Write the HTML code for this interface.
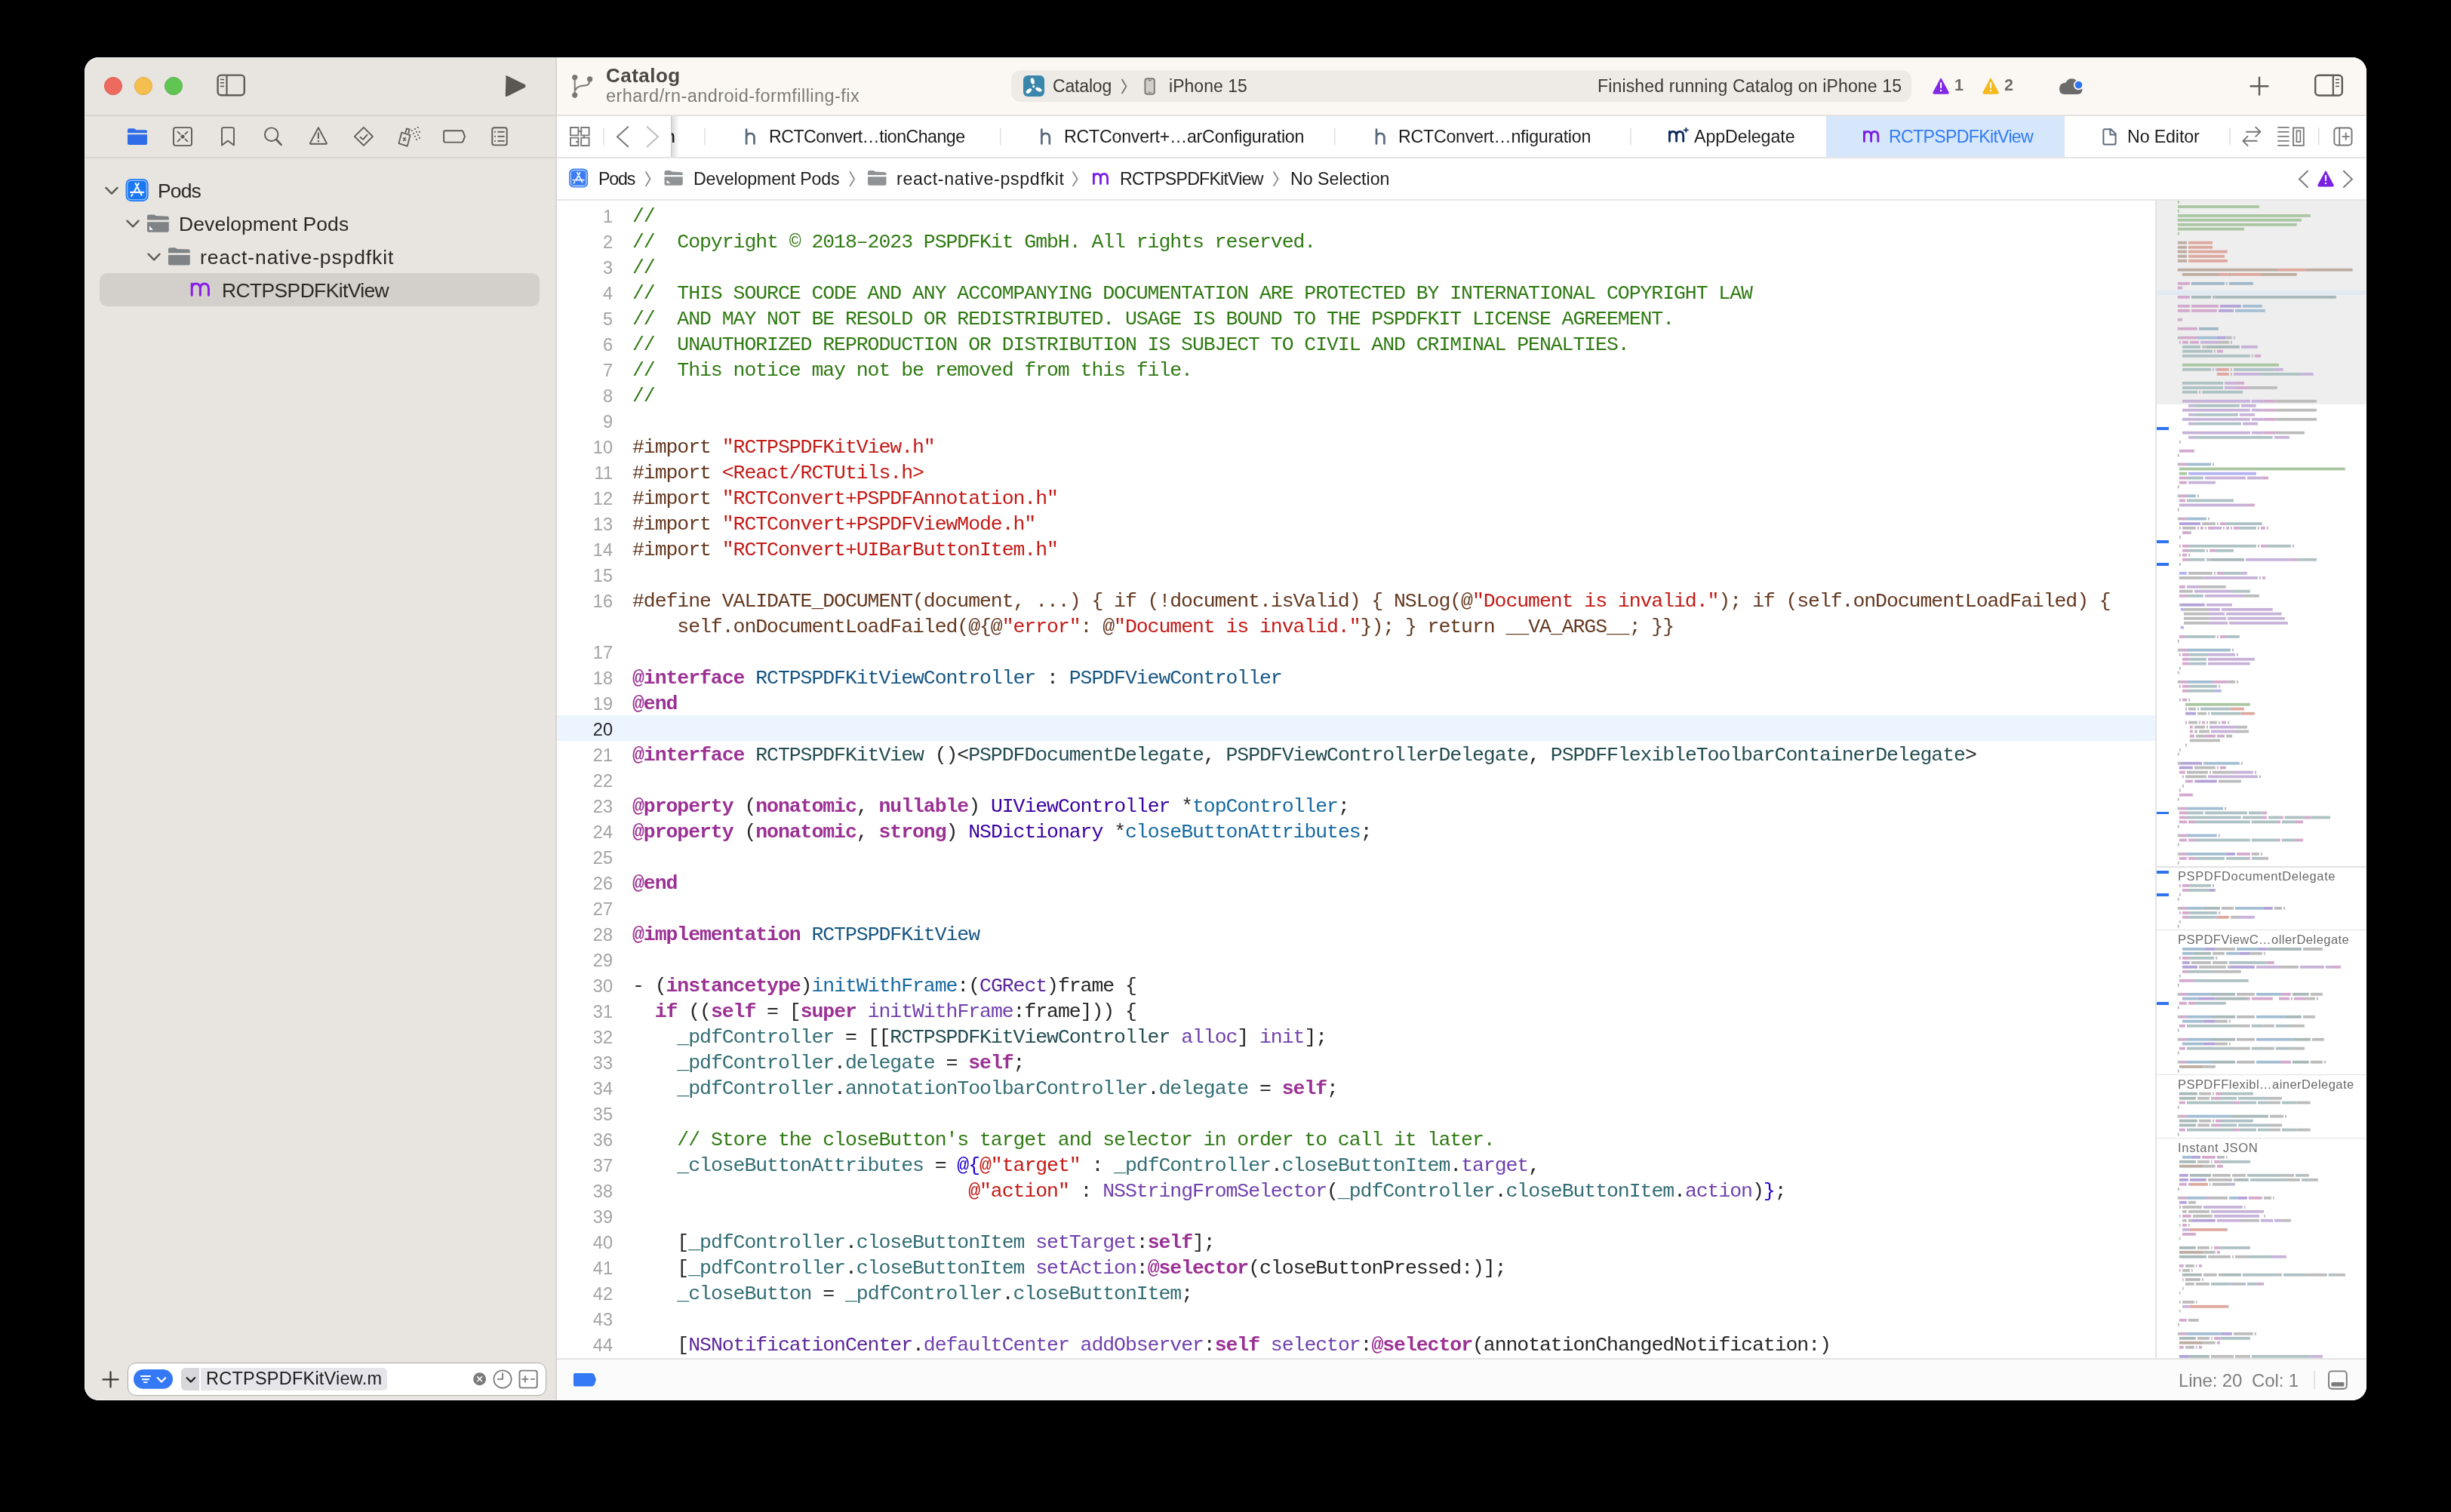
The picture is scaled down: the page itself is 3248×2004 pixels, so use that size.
<!DOCTYPE html>
<html><head><meta charset="utf-8"><style>
*{margin:0;padding:0;box-sizing:border-box}
html,body{width:3248px;height:2004px;background:#000;overflow:hidden;font-family:"Liberation Sans",sans-serif}
.a{position:absolute}
#win{position:absolute;left:112px;top:76px;width:3024px;height:1780px;border-radius:19px;overflow:hidden;background:#fff}
#hl{position:absolute;left:112px;top:76px;width:3024px;height:1780px;border-radius:19px;border:1px solid rgba(255,255,255,0.55)}
#side{position:absolute;left:0;top:0;width:626px;height:1780px;background:#e8e5e1}
#tb{position:absolute;left:626px;top:0;width:2398px;height:76px;background:#fbf8f3}
.txt{position:absolute;white-space:pre;line-height:1;will-change:transform}
.code{position:absolute;white-space:pre;will-change:transform;font-family:"Liberation Mono",monospace;font-size:26.5px;letter-spacing:-1.064px;color:#262626;line-height:34px;height:34px}
.ln{position:absolute;will-change:transform;width:60px;text-align:right;font-size:23.5px;color:#a3a3a3;line-height:34px;height:34px}
.k{color:#9b3194;font-weight:bold}
.s{color:#c41a16}
.c{color:#2f7a12}
.p{color:#643820}
.td{color:#175683}
.od{color:#1769a0}
.pc{color:#244d52}
.pf{color:#326d74}
.oc{color:#3900a0}
.of{color:#7040ae}
.ot{color:#5c2699}
.n{color:#1c00cf}
</style></head>
<body><div id="win">
<div id="side"></div><div class="a" style="left:0.0px;top:76.0px;width:626.0px;height:2.0px;background:#d8d5d1;"></div><div class="a" style="left:0.0px;top:132.0px;width:626.0px;height:2.0px;background:#d8d5d1;"></div><div class="a" style="left:20.0px;top:286.0px;width:583.0px;height:44.0px;background:#d3d0cb;border-radius:10px"></div><div class="txt" style="left:97.4px;top:164.1px;font-size:26.5px;color:#2b2825;font-weight:400;letter-spacing:-0.869px;">Pods</div><div class="txt" style="left:125.3px;top:208.3px;font-size:26.5px;color:#2b2825;font-weight:400;letter-spacing:0.086px;">Development Pods</div><div class="txt" style="left:153.4px;top:252.4px;font-size:26.5px;color:#2b2825;font-weight:400;letter-spacing:0.890px;">react-native-pspdfkit</div><div class="txt" style="left:181.5px;top:296.4px;font-size:26.5px;color:#2b2825;font-weight:400;letter-spacing:-0.643px;">RCTPSPDFKitView</div><div class="a" style="left:624.0px;top:0.0px;width:2.0px;height:1780.0px;background:#d9d6d2;"></div><div id="tb"></div><div class="a" style="left:626.0px;top:76.0px;width:2398.0px;height:2.0px;background:#e4e2df;"></div><div class="txt" style="left:691.0px;top:10.8px;font-size:26px;color:#4a4744;font-weight:700;letter-spacing:0.476px;">Catalog</div><div class="txt" style="left:691.0px;top:40.4px;font-size:23.5px;color:#7f7a75;font-weight:400;letter-spacing:0.451px;">erhard/rn-android-formfilling-fix</div><div class="a" style="left:1228.0px;top:16.6px;width:1193.0px;height:42.9px;background:#eeebe7;border-radius:12px"></div><div class="txt" style="left:1283.0px;top:27.1px;font-size:23px;color:#3b3835;font-weight:400;letter-spacing:-0.164px;">Catalog</div><div class="txt" style="left:1436.7px;top:27.1px;font-size:23px;color:#3b3835;font-weight:400;letter-spacing:0.026px;">iPhone 15</div><div class="txt" style="left:2478.4px;top:27.0px;font-size:21.5px;color:#6e6a66;font-weight:700;">1</div><div class="txt" style="left:2543.6px;top:27.0px;font-size:21.5px;color:#6e6a66;font-weight:700;">2</div><div class="txt" style="left:2005.0px;top:27.1px;font-size:23px;color:#3b3835;font-weight:400;letter-spacing:0.148px;">Finished running Catalog on iPhone 15</div><div class="a" style="left:626.0px;top:78.0px;width:2398.0px;height:54.0px;background:#ffffff;"></div><div class="a" style="left:626.0px;top:132.0px;width:2398.0px;height:2.0px;background:#e4e4e4;"></div><div class="a" style="left:2308.0px;top:78.0px;width:316.0px;height:54.0px;background:#d6e6fb;"></div><div class="txt" style="left:906.9px;top:94.0px;font-size:23.2px;color:#1d1d1d;font-weight:400;letter-spacing:-0.528px;">RCTConvert…tionChange</div><div class="txt" style="left:1298.0px;top:94.0px;font-size:23.2px;color:#1d1d1d;font-weight:400;letter-spacing:-0.220px;">RCTConvert+…arConfiguration</div><div class="txt" style="left:1740.7px;top:94.0px;font-size:23.2px;color:#1d1d1d;font-weight:400;letter-spacing:-0.239px;">RCTConvert…nfiguration</div><div class="txt" style="left:2133.0px;top:94.0px;font-size:23.2px;color:#1d1d1d;font-weight:400;letter-spacing:-0.048px;">AppDelegate</div><div class="txt" style="left:2390.8px;top:94.0px;font-size:23.2px;color:#2f7cf6;font-weight:400;letter-spacing:-0.720px;">RCTPSPDFKitView</div><div class="txt" style="left:2707.3px;top:94.0px;font-size:23.2px;color:#1d1d1d;font-weight:400;letter-spacing:-0.120px;">No Editor</div><div class="a" style="left:626.0px;top:134.0px;width:2398.0px;height:54.0px;background:#ffffff;"></div><div class="a" style="left:626.0px;top:188.0px;width:2398.0px;height:2.0px;background:#e6e6e6;"></div><div class="txt" style="left:680.7px;top:150.0px;font-size:23.2px;color:#1d1d1d;font-weight:400;letter-spacing:-1.153px;">Pods</div><div class="txt" style="left:806.8px;top:150.0px;font-size:23.2px;color:#1d1d1d;font-weight:400;letter-spacing:-0.148px;">Development Pods</div><div class="txt" style="left:1076.1px;top:150.0px;font-size:23.2px;color:#1d1d1d;font-weight:400;letter-spacing:0.661px;">react-native-pspdfkit</div><div class="txt" style="left:1372.0px;top:150.0px;font-size:23.2px;color:#1d1d1d;font-weight:400;letter-spacing:-0.812px;">RCTPSPDFKitView</div><div class="txt" style="left:1598.0px;top:150.0px;font-size:23.2px;color:#1d1d1d;font-weight:400;letter-spacing:0.001px;">No Selection</div><div class="a" style="left:626.0px;top:190.0px;width:2398.0px;height:1534.0px;background:#ffffff;"></div><div class="a" style="left:626.0px;top:872.0px;width:2118.0px;height:34.0px;background:#ecf5ff;"></div><div class="a" style="left:2744.0px;top:190.0px;width:2.0px;height:1534.0px;background:#e3e3e3;"></div><div class="a" style="left:2746.0px;top:190.0px;width:278.0px;height:270.3px;background:#eeeeee;"></div><div class="a" style="left:2746.0px;top:309.0px;width:278.0px;height:6.0px;background:#e1e9f2;"></div><div class="a" style="left:2746.0px;top:1072.3px;width:278.0px;height:1.6px;background:#e2e2e2;"></div><div class="a" style="left:2746.0px;top:1155.8px;width:278.0px;height:1.6px;background:#e2e2e2;"></div><div class="a" style="left:2746.0px;top:1347.7px;width:278.0px;height:1.6px;background:#e2e2e2;"></div><div class="a" style="left:2746.0px;top:1431.7px;width:278.0px;height:1.6px;background:#e2e2e2;"></div><div class="txt" style="left:2773.8px;top:1076.8px;font-size:16.5px;color:#6a6a6a;font-weight:400;letter-spacing:0.612px;">PSPDFDocumentDelegate</div><div class="txt" style="left:2773.8px;top:1160.8px;font-size:16.5px;color:#6a6a6a;font-weight:400;letter-spacing:0.464px;">PSPDFViewC…ollerDelegate</div><div class="txt" style="left:2773.8px;top:1352.8px;font-size:16.5px;color:#6a6a6a;font-weight:400;letter-spacing:0.450px;">PSPDFFlexibl…ainerDelegate</div><div class="txt" style="left:2773.8px;top:1436.8px;font-size:16.5px;color:#6a6a6a;font-weight:400;letter-spacing:0.689px;">Instant JSON</div><div class="a" style="left:2746.0px;top:489.8px;width:16.0px;height:3.8px;background:#2f74ee;"></div><div class="a" style="left:2746.0px;top:640.0px;width:16.0px;height:3.8px;background:#2f74ee;"></div><div class="a" style="left:2746.0px;top:670.0px;width:16.0px;height:3.8px;background:#2f74ee;"></div><div class="a" style="left:2746.0px;top:999.5px;width:16.0px;height:3.8px;background:#2f74ee;"></div><div class="a" style="left:2746.0px;top:1077.9px;width:16.0px;height:3.8px;background:#2f74ee;"></div><div class="a" style="left:2746.0px;top:1107.8px;width:16.0px;height:3.8px;background:#2f74ee;"></div><div class="a" style="left:2746.0px;top:1251.8px;width:16.0px;height:3.8px;background:#2f74ee;"></div><div class="a" style="left:626.0px;top:1724.0px;width:2398.0px;height:2.0px;background:#e3e3e3;"></div><div class="a" style="left:626.0px;top:1726.0px;width:2398.0px;height:54.0px;background:#fbfbfb;"></div><div class="txt" style="left:2774.7px;top:1741.8px;font-size:24px;color:#7f7f7f;font-weight:400;letter-spacing:-0.163px;">Line: 20  Col: 1</div><div class="a" style="left:56.7px;top:1730.0px;width:555.6px;height:43.6px;background:#ffffff;border:1.5px solid #aeaba7;border-radius:11px"></div><div class="a" style="left:128.3px;top:1737.0px;width:23.5px;height:29.8px;background:#d8d8dc;border-radius:6px 0 0 6px"></div><div class="a" style="left:154.1px;top:1737.2px;width:246.6px;height:29.4px;background:#e6e6ea;border-radius:0 5px 5px 0"></div><div class="txt" style="left:160.6px;top:1739.7px;font-size:23.5px;color:#1d1d1d;font-weight:400;letter-spacing:0.232px;">RCTPSPDFKitView.m</div>
<div class="ln" style="left:640px;top:194px">1</div><div class="code" style="left:726.2px;top:194px"><span class="c">//</span></div>
<div class="ln" style="left:640px;top:228px">2</div><div class="code" style="left:726.2px;top:228px"><span class="c">//  Copyright © 2018–2023 PSPDFKit GmbH. All rights reserved.</span></div>
<div class="ln" style="left:640px;top:262px">3</div><div class="code" style="left:726.2px;top:262px"><span class="c">//</span></div>
<div class="ln" style="left:640px;top:296px">4</div><div class="code" style="left:726.2px;top:296px"><span class="c">//  THIS SOURCE CODE AND ANY ACCOMPANYING DOCUMENTATION ARE PROTECTED BY INTERNATIONAL COPYRIGHT LAW</span></div>
<div class="ln" style="left:640px;top:330px">5</div><div class="code" style="left:726.2px;top:330px"><span class="c">//  AND MAY NOT BE RESOLD OR REDISTRIBUTED. USAGE IS BOUND TO THE PSPDFKIT LICENSE AGREEMENT.</span></div>
<div class="ln" style="left:640px;top:364px">6</div><div class="code" style="left:726.2px;top:364px"><span class="c">//  UNAUTHORIZED REPRODUCTION OR DISTRIBUTION IS SUBJECT TO CIVIL AND CRIMINAL PENALTIES.</span></div>
<div class="ln" style="left:640px;top:398px">7</div><div class="code" style="left:726.2px;top:398px"><span class="c">//  This notice may not be removed from this file.</span></div>
<div class="ln" style="left:640px;top:432px">8</div><div class="code" style="left:726.2px;top:432px"><span class="c">//</span></div>
<div class="ln" style="left:640px;top:466px">9</div><div class="ln" style="left:640px;top:500px">10</div><div class="code" style="left:726.2px;top:500px"><span class="p">#import </span><span class="s">&quot;RCTPSPDFKitView.h&quot;</span></div>
<div class="ln" style="left:640px;top:534px">11</div><div class="code" style="left:726.2px;top:534px"><span class="p">#import </span><span class="s">&lt;React/RCTUtils.h&gt;</span></div>
<div class="ln" style="left:640px;top:568px">12</div><div class="code" style="left:726.2px;top:568px"><span class="p">#import </span><span class="s">&quot;RCTConvert+PSPDFAnnotation.h&quot;</span></div>
<div class="ln" style="left:640px;top:602px">13</div><div class="code" style="left:726.2px;top:602px"><span class="p">#import </span><span class="s">&quot;RCTConvert+PSPDFViewMode.h&quot;</span></div>
<div class="ln" style="left:640px;top:636px">14</div><div class="code" style="left:726.2px;top:636px"><span class="p">#import </span><span class="s">&quot;RCTConvert+UIBarButtonItem.h&quot;</span></div>
<div class="ln" style="left:640px;top:670px">15</div><div class="ln" style="left:640px;top:704px">16</div><div class="code" style="left:726.2px;top:704px"><span class="p">#define VALIDATE_DOCUMENT(document, ...) { if (!document.isValid) { NSLog(@</span><span class="s">&quot;Document is invalid.&quot;</span><span class="p">); if (self.onDocumentLoadFailed) {</span></div>
<div class="code" style="left:726.2px;top:738px"><span class="p">    self.onDocumentLoadFailed(@{@</span><span class="s">&quot;error&quot;</span><span class="p">: @</span><span class="s">&quot;Document is invalid.&quot;</span><span class="p">}); } return __VA_ARGS__; }}</span></div>
<div class="ln" style="left:640px;top:772px">17</div><div class="ln" style="left:640px;top:806px">18</div><div class="code" style="left:726.2px;top:806px"><span class="k">@interface</span> <span class="td">RCTPSPDFKitViewController</span> : <span class="td">PSPDFViewController</span></div>
<div class="ln" style="left:640px;top:840px">19</div><div class="code" style="left:726.2px;top:840px"><span class="k">@end</span></div>
<div class="ln" style="left:640px;top:874px;color:#262626">20</div><div class="ln" style="left:640px;top:908px">21</div><div class="code" style="left:726.2px;top:908px"><span class="k">@interface</span> <span class="pc">RCTPSPDFKitView</span> ()&lt;<span class="pc">PSPDFDocumentDelegate</span>, <span class="pc">PSPDFViewControllerDelegate</span>, <span class="pc">PSPDFFlexibleToolbarContainerDelegate</span>&gt;</div>
<div class="ln" style="left:640px;top:942px">22</div><div class="ln" style="left:640px;top:976px">23</div><div class="code" style="left:726.2px;top:976px"><span class="k">@property</span> (<span class="k">nonatomic</span>, <span class="k">nullable</span>) <span class="oc">UIViewController</span> *<span class="od">topController</span>;</div>
<div class="ln" style="left:640px;top:1010px">24</div><div class="code" style="left:726.2px;top:1010px"><span class="k">@property</span> (<span class="k">nonatomic</span>, <span class="k">strong</span>) <span class="oc">NSDictionary</span> *<span class="od">closeButtonAttributes</span>;</div>
<div class="ln" style="left:640px;top:1044px">25</div><div class="ln" style="left:640px;top:1078px">26</div><div class="code" style="left:726.2px;top:1078px"><span class="k">@end</span></div>
<div class="ln" style="left:640px;top:1112px">27</div><div class="ln" style="left:640px;top:1146px">28</div><div class="code" style="left:726.2px;top:1146px"><span class="k">@implementation</span> <span class="td">RCTPSPDFKitView</span></div>
<div class="ln" style="left:640px;top:1180px">29</div><div class="ln" style="left:640px;top:1214px">30</div><div class="code" style="left:726.2px;top:1214px">- (<span class="k">instancetype</span>)<span class="od">initWithFrame</span>:(<span class="ot">CGRect</span>)frame {</div>
<div class="ln" style="left:640px;top:1248px">31</div><div class="code" style="left:726.2px;top:1248px">  <span class="k">if</span> ((<span class="k">self</span> = [<span class="k">super</span> <span class="of">initWithFrame</span>:frame])) {</div>
<div class="ln" style="left:640px;top:1282px">32</div><div class="code" style="left:726.2px;top:1282px">    <span class="pf">_pdfController</span> = [[<span class="pc">RCTPSPDFKitViewController</span> <span class="of">alloc</span>] <span class="of">init</span>];</div>
<div class="ln" style="left:640px;top:1316px">33</div><div class="code" style="left:726.2px;top:1316px">    <span class="pf">_pdfController</span>.<span class="pf">delegate</span> = <span class="k">self</span>;</div>
<div class="ln" style="left:640px;top:1350px">34</div><div class="code" style="left:726.2px;top:1350px">    <span class="pf">_pdfController</span>.<span class="pf">annotationToolbarController</span>.<span class="pf">delegate</span> = <span class="k">self</span>;</div>
<div class="ln" style="left:640px;top:1384px">35</div><div class="ln" style="left:640px;top:1418px">36</div><div class="code" style="left:726.2px;top:1418px">    <span class="c">// Store the closeButton&#x27;s target and selector in order to call it later.</span></div>
<div class="ln" style="left:640px;top:1452px">37</div><div class="code" style="left:726.2px;top:1452px">    <span class="pf">_closeButtonAttributes</span> = <span class="n">@{</span><span class="s">@&quot;target&quot;</span> : <span class="pf">_pdfController</span>.<span class="pf">closeButtonItem</span>.<span class="of">target</span>,</div>
<div class="ln" style="left:640px;top:1486px">38</div><div class="code" style="left:726.2px;top:1486px">                              <span class="s">@&quot;action&quot;</span> : <span class="of">NSStringFromSelector</span>(<span class="pf">_pdfController</span>.<span class="pf">closeButtonItem</span>.<span class="of">action</span>)<span class="n">}</span>;</div>
<div class="ln" style="left:640px;top:1520px">39</div><div class="ln" style="left:640px;top:1554px">40</div><div class="code" style="left:726.2px;top:1554px">    [<span class="pf">_pdfController</span>.<span class="pf">closeButtonItem</span> <span class="of">setTarget</span>:<span class="k">self</span>];</div>
<div class="ln" style="left:640px;top:1588px">41</div><div class="code" style="left:726.2px;top:1588px">    [<span class="pf">_pdfController</span>.<span class="pf">closeButtonItem</span> <span class="of">setAction</span>:<span class="k">@selector</span>(closeButtonPressed:)];</div>
<div class="ln" style="left:640px;top:1622px">42</div><div class="code" style="left:726.2px;top:1622px">    <span class="pf">_closeButton</span> = <span class="pf">_pdfController</span>.<span class="pf">closeButtonItem</span>;</div>
<div class="ln" style="left:640px;top:1656px">43</div><div class="ln" style="left:640px;top:1690px">44</div><div class="code" style="left:726.2px;top:1690px">    [<span class="ot">NSNotificationCenter</span>.<span class="of">defaultCenter</span> <span class="of">addObserver</span>:<span class="k">self</span> <span class="of">selector</span>:<span class="k">@selector</span>(annotationChangedNotification:)</div>

</div><svg class="a" style="left:0;top:0" width="3248" height="2004" viewBox="0 0 3248 2004"><circle cx="150" cy="114" r="11.6" fill="#ed6a5e" stroke="#d5554a" stroke-width="0.8"/>
<circle cx="190" cy="114" r="11.6" fill="#f5bf4f" stroke="#d9a03c" stroke-width="0.8"/>
<circle cx="230" cy="114" r="11.6" fill="#61c554" stroke="#4ea840" stroke-width="0.8"/>
<rect x="288.6" y="99.6" width="35.2" height="26.6" rx="4.5" fill="none" stroke="#5f5b57" stroke-width="2.4"/>
<line x1="300.5" y1="100" x2="300.5" y2="126" stroke="#5f5b57" stroke-width="2.2"/>
<line x1="291.8" y1="105.4" x2="297" y2="105.4" stroke="#5f5b57" stroke-width="1.6"/>
<line x1="291.8" y1="109.8" x2="297" y2="109.8" stroke="#5f5b57" stroke-width="1.6"/>
<line x1="291.8" y1="114.4" x2="297" y2="114.4" stroke="#5f5b57" stroke-width="1.6"/>
<path d="M671.5,102.5 Q670,100.8 672.2,101.6 L694.6,112.6 Q696.6,114 694.6,115.4 L672.2,126.6 Q670,127.6 670.8,125.6 Z" fill="#5b5752" stroke="#5b5752" stroke-width="2" stroke-linejoin="round"/>
<path d="M169,172.5 Q169,170.2 171.3,170.2 L177,170.2 Q178.5,170.2 179.5,171.6 L180.2,172.3 L193,172.3 Q195,172.3 195,174.5 L195,176.2 L169,176.2 Z" fill="#2f6de8"/>
<path d="M169,178.3 L195,178.3 L195,189.8 Q195,192 192.8,192 L171.2,192 Q169,192 169,189.8 Z" fill="#2f6de8"/>
<rect x="230" y="169.1" width="24" height="23.8" rx="2.6" fill="none" stroke="#5f5b57" stroke-width="1.9"/>
<circle cx="242" cy="181" r="2.6" fill="#5f5b57"/>
<path d="M235.5,174.6 L238.6,177.7 M248.5,174.6 L245.4,177.7 M235.5,187.4 L238.6,184.3 M248.5,187.4 L245.4,184.3" stroke="#5f5b57" stroke-width="1.7" stroke-linecap="round"/>
<path d="M294,192.6 L294,171.3 Q294,169.1 296.2,169.1 L307.8,169.1 Q310,169.1 310,171.3 L310,192.6 L302,186.6 Z" fill="none" stroke="#5f5b57" stroke-width="1.9" stroke-linejoin="round"/>
<circle cx="359.7" cy="178.2" r="8.8" fill="none" stroke="#5f5b57" stroke-width="1.9"/>
<line x1="366.2" y1="185" x2="372.6" y2="191.8" stroke="#5f5b57" stroke-width="2.6" stroke-linecap="round"/>
<path d="M421.9,169.2 L432.8,189.6 Q433.4,190.8 432,190.8 L411.8,190.8 Q410.4,190.8 411,189.6 Z" fill="none" stroke="#5f5b57" stroke-width="1.9" stroke-linejoin="round"/>
<path d="M421.9,176.6 L421.9,183.2" stroke="#5f5b57" stroke-width="2" stroke-linecap="round"/><circle cx="421.9" cy="187" r="1.2" fill="#5f5b57"/>
<path d="M481.9,168.8 L493.9,180.8 L481.9,192.8 L469.9,180.8 Z" fill="none" stroke="#5f5b57" stroke-width="1.9" stroke-linejoin="round"/>
<path d="M477.4,181.8 L481.1,184.9 L486.6,178.6" fill="none" stroke="#5f5b57" stroke-width="1.8" stroke-linecap="round" stroke-linejoin="round"/>
<path d="M532.3,175.5 L543.5,179.2 L539.8,193.6 L528.5,190.1 Z" fill="none" stroke="#5f5b57" stroke-width="1.8" stroke-linejoin="round"/>
<path d="M537.3,175.9 L538.8,170.5 L542.6,171.5 L541.2,177" fill="none" stroke="#5f5b57" stroke-width="1.8"/>
<path d="M534,182.5 L538,186.5 M537.5,182 L534.5,187" stroke="#5f5b57" stroke-width="1.5"/>
<rect x="552.9" y="168.0" width="1.8" height="1.8" fill="#5f5b57"/>
<rect x="549.0" y="170.1" width="1.8" height="1.8" fill="#5f5b57"/>
<rect x="545.0" y="172.0" width="1.8" height="1.8" fill="#5f5b57"/>
<rect x="551.1" y="173.9" width="1.8" height="1.8" fill="#5f5b57"/>
<rect x="555.0" y="173.9" width="1.8" height="1.8" fill="#5f5b57"/>
<rect x="547.0" y="176.0" width="1.8" height="1.8" fill="#5f5b57"/>
<rect x="553.1" y="178.1" width="1.8" height="1.8" fill="#5f5b57"/>
<rect x="549.0" y="179.9" width="1.8" height="1.8" fill="#5f5b57"/>
<rect x="555.0" y="181.9" width="1.8" height="1.8" fill="#5f5b57"/>
<rect x="551.1" y="184.0" width="1.8" height="1.8" fill="#5f5b57"/>
<path d="M590,173.2 L611.6,173.2 Q612.8,173.2 613.5,174.2 L616,180.8 L613.5,187.5 Q612.8,188.6 611.6,188.6 L590,188.6 Q588.1,188.6 588.1,186.6 L588.1,175.2 Q588.1,173.2 590,173.2 Z" fill="none" stroke="#5f5b57" stroke-width="1.9" stroke-linejoin="round"/>
<rect x="652.3" y="169.2" width="19.4" height="23.2" rx="2.6" fill="none" stroke="#5f5b57" stroke-width="1.9"/>
<rect x="655.1" y="173.9" width="1.8" height="1.8" fill="#5f5b57"/><line x1="659.4" y1="174.8" x2="668.6" y2="174.8" stroke="#5f5b57" stroke-width="1.8"/>
<rect x="655.1" y="179.9" width="1.8" height="1.8" fill="#5f5b57"/><line x1="659.4" y1="180.8" x2="668.6" y2="180.8" stroke="#5f5b57" stroke-width="1.8"/>
<rect x="655.1" y="186.0" width="1.8" height="1.8" fill="#5f5b57"/><line x1="659.4" y1="186.9" x2="668.6" y2="186.9" stroke="#5f5b57" stroke-width="1.8"/>
<path d="M140.4,248.9 L148.0,256.6 L155.5,248.9" fill="none" stroke="#5f5b57" stroke-width="2.4" stroke-linecap="round" stroke-linejoin="round"/>
<path d="M168.5,292.7 L176.1,300.4 L183.6,292.7" fill="none" stroke="#5f5b57" stroke-width="2.4" stroke-linecap="round" stroke-linejoin="round"/>
<path d="M196.5,336.7 L204.1,344.4 L211.6,336.7" fill="none" stroke="#5f5b57" stroke-width="2.4" stroke-linecap="round" stroke-linejoin="round"/>
<rect x="166.6" y="236.9" width="30" height="30" rx="7.2" fill="#1a78f6"/><rect x="168.79999999999998" y="239.1" width="25.6" height="25.6" rx="5.0" fill="none" stroke="#a9c9f2" stroke-width="1.1"/><path d="M179.5,243.1 L187.6,258.5 M183.7,243.1 L177.5,254.9 M173.0,254.9 L190.2,254.9 M175.5,257.7 L174.3,259.7" stroke="rgba(255,255,255,0.93)" stroke-width="2.2" stroke-linecap="round"/>
<rect x="754.1" y="223.6" width="25" height="25" rx="6.0" fill="#3a7cf1"/><rect x="756.3000000000001" y="225.79999999999998" width="20.6" height="20.6" rx="4.2" fill="none" stroke="#d0e0fb" stroke-width="1.1"/><path d="M764.9,228.8 L771.6,241.6 M768.4,228.8 L763.2,238.6 M759.4,238.6 L773.8,238.6 M761.5,240.9 L760.5,242.6" stroke="rgba(255,255,255,0.93)" stroke-width="1.8" stroke-linecap="round"/>
<path d="M195,286.7 Q195,284.5 197.2,284.5 L203.64,284.5 Q205.368,284.5 206.52,286.1 L221.8,286.8 Q223.8,286.8 223.8,288.8 L223.8,291.46 L195,291.46 Z" fill="#7f8386"/><path d="M195,294.244 L223.8,294.244 L223.8,305.5 Q223.8,307.7 221.60000000000002,307.7 L197.2,307.7 Q195,307.7 195,305.5 Z" fill="#7f8386"/><path d="M198,299.58 L198,304.7 L203,304.7 Z" fill="#fff"/>
<path d="M223,330.5 Q223,328.3 225.2,328.3 L231.64,328.3 Q233.368,328.3 234.52,329.90000000000003 L249.8,330.6 Q251.8,330.6 251.8,332.6 L251.8,335.26 L223,335.26 Z" fill="#7f8386"/><path d="M223,338.044 L251.8,338.044 L251.8,349.3 Q251.8,351.5 249.60000000000002,351.5 L225.2,351.5 Q223,351.5 223,349.3 Z" fill="#7f8386"/>
<path d="M880.5,228.2 Q880.5,226 882.7,226 L887.79,226 Q889.248,226 890.22,227.6 L902.8,228.3 Q904.8,228.3 904.8,230.3 L904.8,231.94 L880.5,231.94 Z" fill="#8f9396"/><path d="M880.5,234.316 L904.8,234.316 L904.8,243.60000000000002 Q904.8,245.8 902.5999999999999,245.8 L882.7,245.8 Q880.5,245.8 880.5,243.60000000000002 Z" fill="#8f9396"/><path d="M883.5,238.87 L883.5,242.8 L888.5,242.8 Z" fill="#fff"/>
<path d="M1150,228.2 Q1150,226 1152.2,226 L1157.35,226 Q1158.82,226 1159.8,227.6 L1172.5,228.3 Q1174.5,228.3 1174.5,230.3 L1174.5,231.94 L1150,231.94 Z" fill="#8f9396"/><path d="M1150,234.316 L1174.5,234.316 L1174.5,243.60000000000002 Q1174.5,245.8 1172.3,245.8 L1152.2,245.8 Q1150,245.8 1150,243.60000000000002 Z" fill="#8f9396"/>
<path d="M254.2,391.2 L254.2,375.9 M254.2,382.9 Q254.2,375.9 259.8,375.9 Q265.4,375.9 265.4,382.9 L265.4,391.2 M265.4,382.9 Q265.4,375.9 270.9,375.9 Q276.5,375.9 276.5,382.9 L276.5,391.2" fill="none" stroke="#8a1ee8" stroke-width="3.0" stroke-linecap="round"/>
<path d="M2470.4,187.4 L2470.4,174.4 M2470.4,180.4 Q2470.4,174.4 2475.0,174.4 Q2479.6,174.4 2479.6,180.4 L2479.6,187.4 M2479.6,180.4 Q2479.6,174.4 2484.2,174.4 Q2488.8,174.4 2488.8,180.4 L2488.8,187.4" fill="none" stroke="#7a1ee3" stroke-width="2.8" stroke-linecap="round"/>
<path d="M1449.4,243.6 L1449.4,230.4 M1449.4,236.5 Q1449.4,230.4 1454.0,230.4 Q1458.5,230.4 1458.5,236.5 L1458.5,243.6 M1458.5,236.5 Q1458.5,230.4 1463.0,230.4 Q1467.6,230.4 1467.6,236.5 L1467.6,243.6" fill="none" stroke="#7a1ee3" stroke-width="2.8" stroke-linecap="round"/>
<path d="M2212.4,187.3 L2212.4,174.4 M2212.4,180.4 Q2212.4,174.4 2217.0,174.4 Q2221.6,174.4 2221.6,180.4 L2221.6,187.3 M2221.6,180.4 Q2221.6,174.4 2226.1,174.4 Q2230.7,174.4 2230.7,180.4 L2230.7,187.3" fill="none" stroke="#0b2a5c" stroke-width="2.8" stroke-linecap="round"/>
<path d="M2234.3,169.2 L2234.3,175.6 M2231,172.4 L2237.6,172.4" stroke="#0b2a5c" stroke-width="1.8"/>
<path d="M989.1,171.6 L989.1,190.4 M989.1,183 Q989.1,176.8 994.3000000000001,176.8 Q999.5,176.8 999.5,182.6 L999.5,190.4" fill="none" stroke="#5b6b7d" stroke-width="2.7" stroke-linecap="round"/>
<path d="M1380.4,171.6 L1380.4,190.4 M1380.4,183 Q1380.4,176.8 1385.6,176.8 Q1390.8,176.8 1390.8,182.6 L1390.8,190.4" fill="none" stroke="#5b6b7d" stroke-width="2.7" stroke-linecap="round"/>
<path d="M1824.0,171.6 L1824.0,190.4 M1824.0,183 Q1824.0,176.8 1829.1999999999998,176.8 Q1834.3999999999999,176.8 1834.3999999999999,182.6 L1834.3999999999999,190.4" fill="none" stroke="#5b6b7d" stroke-width="2.7" stroke-linecap="round"/>
<rect x="738" y="154" width="151" height="54" fill="#fff"/>
<path d="M889.6,177.2 Q892.2,177.4 892.2,181 L892.2,189" fill="none" stroke="#1d1d1d" stroke-width="2.4"/>
<defs><linearGradient id="sh" x1="0" x2="1"><stop offset="0" stop-color="#000" stop-opacity="0.16"/><stop offset="1" stop-color="#000" stop-opacity="0"/></linearGradient></defs>
<rect x="889" y="154" width="11" height="54" fill="url(#sh)"/>
<line x1="889.5" y1="154" x2="889.5" y2="208" stroke="#c8c8c8" stroke-width="1"/>
<path d="M756,169 h10.4 v10.4 h-10.4 Z M770.2,169 h10.4 v10.4 h-10.4 Z M756,182.6 h10.4 v10.4 h-10.4 Z M770.2,182.6 h10.4 v10.4 h-10.4 Z" fill="none" stroke="#7a7a7a" stroke-width="1.9"/>
<path d="M766.4,174 L771.6,174 M774,179.4 L774,183 M766.4,188 L763,188" stroke="#7a7a7a" stroke-width="1.9"/>
<line x1="800" y1="169.4" x2="800" y2="192.4" stroke="#e2e2e2" stroke-width="1.6"/>
<path d="M832.2,168.2 L818,181.2 L832.2,194.2" fill="none" stroke="#7c7c7c" stroke-width="2.1" stroke-linecap="round"/>
<path d="M857.8,168.2 L872,181.2 L857.8,194.2" fill="none" stroke="#c0c0c0" stroke-width="2.1" stroke-linecap="round"/>
<line x1="934" y1="169.4" x2="934" y2="192.6" stroke="#e2e2e2" stroke-width="1.6"/>
<line x1="1325.7" y1="169.4" x2="1325.7" y2="192.6" stroke="#e2e2e2" stroke-width="1.6"/>
<line x1="1768.8" y1="169.4" x2="1768.8" y2="192.6" stroke="#e2e2e2" stroke-width="1.6"/>
<line x1="2161" y1="169.4" x2="2161" y2="192.6" stroke="#e2e2e2" stroke-width="1.6"/>
<path d="M2787.4,173.3 Q2787.4,171.3 2789.4,171.3 L2797.4,171.3 L2803.6,177.5 L2803.6,189.6 Q2803.6,191.6 2801.6,191.6 L2789.4,191.6 Q2787.4,191.6 2787.4,189.6 Z M2796.4,171.6 L2796.4,178.4 L2803.4,178.4" fill="none" stroke="#5b6b7d" stroke-width="2" stroke-linejoin="round"/>
<line x1="2955" y1="169.3" x2="2955" y2="192.6" stroke="#e0e0e0" stroke-width="1.6"/>
<line x1="3072.7" y1="169.3" x2="3072.7" y2="192.6" stroke="#e0e0e0" stroke-width="1.6"/>
<path d="M2977,174.7 L2995,174.7 M2989.2,168.6 L2995.4,174.7 L2989.2,180.9 M2990.6,186.8 L2972.6,186.8 M2978.5,180.7 L2972.4,186.8 L2978.5,193" fill="none" stroke="#767676" stroke-width="1.9" stroke-linecap="round" stroke-linejoin="round"/>
<line x1="3018.2" y1="168.9" x2="3033.5" y2="168.9" stroke="#767676" stroke-width="1.7"/>
<line x1="3018.2" y1="174.8" x2="3033.5" y2="174.8" stroke="#767676" stroke-width="1.7"/>
<line x1="3018.2" y1="180.8" x2="3033.5" y2="180.8" stroke="#767676" stroke-width="1.7"/>
<line x1="3018.2" y1="186.8" x2="3033.5" y2="186.8" stroke="#767676" stroke-width="1.7"/>
<line x1="3018.2" y1="192.8" x2="3033.5" y2="192.8" stroke="#767676" stroke-width="1.7"/>
<rect x="3039" y="169.4" width="13.8" height="23.4" fill="none" stroke="#767676" stroke-width="1.8"/><rect x="3043.4" y="173.4" width="5" height="14.6" fill="none" stroke="#767676" stroke-width="1.7"/>
<rect x="3093.3" y="169.5" width="23.2" height="23" rx="4" fill="none" stroke="#767676" stroke-width="1.9"/><line x1="3100.2" y1="169.5" x2="3100.2" y2="192.5" stroke="#767676" stroke-width="1.8"/><path d="M3108.7,175.8 L3108.7,185.8 M3103.7,180.8 L3113.7,180.8" stroke="#767676" stroke-width="1.8"/>
<path d="M761.7,103 L761.7,126 M781.6,105 Q781.6,113 776,113.2 Q764,113.6 762.6,119.5" fill="none" stroke="#7a7672" stroke-width="1.9"/>
<circle cx="761.7" cy="102.6" r="3.6" fill="#7a7672"/>
<circle cx="781.6" cy="104.9" r="3.6" fill="#7a7672"/>
<circle cx="761.7" cy="126.1" r="3.6" fill="#7a7672"/>
<rect x="1356" y="99.9" width="28" height="28" rx="6" fill="#3a87ab"/>
<g fill="#fff"><ellipse cx="1368.3" cy="107.5" rx="2.4" ry="4.2" transform="rotate(-15 1368.3 107.5)"/><ellipse cx="1376.4" cy="118.7" rx="4.5" ry="2.3" transform="rotate(25 1376.4 118.7)"/><ellipse cx="1363.4" cy="120.6" rx="4.3" ry="2.4" transform="rotate(-40 1363.4 120.6)"/><circle cx="1369.6" cy="114.6" r="1.6"/></g>
<path d="M1487,105.5 L1492.4,114.5 L1487,123.5" fill="none" stroke="#7a7672" stroke-width="1.9" stroke-linecap="round"/>
<rect x="1517.4" y="104.3" width="12.4" height="20.4" rx="2.6" fill="#d2cfcb" stroke="#7a7672" stroke-width="1.9"/><path d="M1521.6,106.6 h4 M1521.6,122.3 h4" stroke="#7a7672" stroke-width="1.1"/>
<path d="M2572.05,104.3 L2581.7999999999997,122.30000000000001 Q2582.6,123.9 2580.6,123.9 L2563.5,123.9 Q2561.5,123.9 2562.3,122.30000000000001 Z" fill="#8228e6" stroke="#8228e6" stroke-width="1.5" stroke-linejoin="round"/><path d="M2572.05,109.892 L2572.05,116.072" stroke="#fff" stroke-width="2.1" stroke-linecap="round"/><circle cx="2572.05" cy="120.0" r="1.2" fill="#fff"/>
<path d="M2638.0,104.3 L2647.7,122.30000000000001 Q2648.5,123.9 2646.5,123.9 L2629.5,123.9 Q2627.5,123.9 2628.3,122.30000000000001 Z" fill="#f6b91c" stroke="#f6b91c" stroke-width="1.5" stroke-linejoin="round"/><path d="M2638.0,109.892 L2638.0,116.072" stroke="#fff" stroke-width="2.1" stroke-linecap="round"/><circle cx="2638.0" cy="120.0" r="1.2" fill="#fff"/>
<path d="M3082.0,227.2 L3091.7999999999997,245.2 Q3092.6,246.79999999999998 3090.6,246.79999999999998 L3073.4,246.79999999999998 Q3071.4,246.79999999999998 3072.2000000000003,245.2 Z" fill="#7a22e4" stroke="#7a22e4" stroke-width="1.5" stroke-linejoin="round"/><path d="M3082.0,232.792 L3082.0,238.97199999999998" stroke="#fff" stroke-width="2.1" stroke-linecap="round"/><circle cx="3082.0" cy="242.9" r="1.2" fill="#fff"/>
<path d="M3057.9,226.8 L3046.9,237.4 L3057.9,248 M3105.9,226.8 L3116.9,237.4 L3105.9,248" fill="none" stroke="#7c7c7c" stroke-width="2" stroke-linecap="round"/>
<path d="M2735,124.9 L2753,124.9 Q2759.4,124.9 2759.4,118.6 Q2759.4,113 2754.3,112.4 Q2752.5,104.3 2745.5,104.3 Q2739.8,104.3 2737.7,109.6 Q2729,110.2 2729,117.6 Q2729,124.9 2735,124.9 Z" fill="#6b6b6b"/>
<circle cx="2754.5" cy="112.6" r="6.6" fill="#faf8f4"/><circle cx="2754.5" cy="112.6" r="4.8" fill="#2f74ee"/>
<path d="M2994,102.8 L2994,125.6 M2982.6,114.2 L3005.4,114.2" stroke="#5f5b57" stroke-width="2.4" stroke-linecap="round"/>
<rect x="3068.2" y="99.7" width="35.6" height="26.8" rx="4.5" fill="none" stroke="#5f5b57" stroke-width="2.4"/><line x1="3091.8" y1="100" x2="3091.8" y2="126" stroke="#5f5b57" stroke-width="2.2"/>
<line x1="3095" y1="105.4" x2="3100" y2="105.4" stroke="#5f5b57" stroke-width="1.6"/>
<line x1="3095" y1="109.8" x2="3100" y2="109.8" stroke="#5f5b57" stroke-width="1.6"/>
<line x1="3095" y1="114.4" x2="3100" y2="114.4" stroke="#5f5b57" stroke-width="1.6"/>
<path d="M856,228 L861.6,237.2 L856,246.4" fill="none" stroke="#8a8a8a" stroke-width="1.8" stroke-linecap="round"/>
<path d="M1126.5,228 L1132.1,237.2 L1126.5,246.4" fill="none" stroke="#8a8a8a" stroke-width="1.8" stroke-linecap="round"/>
<path d="M1422,228 L1427.6,237.2 L1422,246.4" fill="none" stroke="#8a8a8a" stroke-width="1.8" stroke-linecap="round"/>
<path d="M1688,228 L1693.6,237.2 L1688,246.4" fill="none" stroke="#8a8a8a" stroke-width="1.8" stroke-linecap="round"/>
<path d="M146.5,1818.4 L146.5,1838.4 M136.5,1828.4 L156.5,1828.4" stroke="#3a3632" stroke-width="2.3" stroke-linecap="round"/>
<rect x="177" y="1815" width="52" height="25.8" rx="12.9" fill="#3478f6"/>
<path d="M186.2,1824 L199.8,1824 M188.2,1828.2 L197.8,1828.2 M190.1,1832.1 L195.5,1832.1" stroke="#fff" stroke-width="1.9"/>
<path d="M208.9,1826.2 L214,1831.5 L219.2,1826.2" fill="none" stroke="#fff" stroke-width="2.3" stroke-linecap="round" stroke-linejoin="round"/>
<path d="M247.7,1826.2 L252.9,1831.5 L258.1,1826.2" fill="none" stroke="#1e1e1e" stroke-width="2.3" stroke-linecap="round" stroke-linejoin="round"/>
<circle cx="635.6" cy="1827.7" r="8.5" fill="#7b7b7b"/><path d="M632.3,1824.4 L638.9,1831 M638.9,1824.4 L632.3,1831" stroke="#fff" stroke-width="1.5"/>
<circle cx="666" cy="1827.9" r="11.6" fill="none" stroke="#7a7a7a" stroke-width="1.8"/><path d="M666,1819.6 L666,1827.9 L659,1827.9" fill="none" stroke="#7a7a7a" stroke-width="1.8"/>
<rect x="688.5" y="1816.6" width="23.2" height="22.8" rx="2.6" fill="none" stroke="#7a7a7a" stroke-width="1.9"/><path d="M695.9,1823.4 L695.9,1832.4 M691.4,1827.9 L700.4,1827.9 M703.2,1827.9 L708.6,1827.9" stroke="#7a7a7a" stroke-width="1.8"/>
<path d="M762,1820 L784,1820 Q786.3,1820 787.6,1822 L790,1828.8 L787.6,1835.6 Q786.3,1837.6 784,1837.6 L762,1837.6 Q760,1837.6 760,1835.6 L760,1822 Q760,1820 762,1820 Z" fill="#3478f6"/>
<line x1="3067" y1="1817" x2="3067" y2="1841" stroke="#dcdcdc" stroke-width="1.6"/>
<rect x="3086" y="1817.4" width="23.8" height="23.4" rx="4" fill="none" stroke="#7a7a7a" stroke-width="1.9"/><rect x="3089.4" y="1832" width="17" height="5.6" rx="1.6" fill="#7a7a7a"/><rect x="2885.8" y="266.0" width="2.0" height="3.8" fill="#aac6a2"/>
<rect x="2885.8" y="272.1" width="108.2" height="3.8" fill="#aac6a2"/>
<rect x="2885.8" y="277.9" width="2.0" height="3.8" fill="#aac6a2"/>
<rect x="2885.8" y="284.0" width="176.0" height="3.8" fill="#aac6a2"/>
<rect x="2885.8" y="289.8" width="164.0" height="3.8" fill="#aac6a2"/>
<rect x="2885.8" y="295.9" width="157.9" height="3.8" fill="#aac6a2"/>
<rect x="2885.8" y="301.7" width="88.1" height="3.8" fill="#aac6a2"/>
<rect x="2885.8" y="307.8" width="2.0" height="3.8" fill="#aac6a2"/>
<rect x="2885.8" y="319.8" width="12.2" height="3.8" fill="#bdaca2"/>
<rect x="2900.0" y="319.8" width="32.0" height="3.8" fill="#dea89f"/>
<rect x="2885.8" y="325.9" width="12.2" height="3.8" fill="#bdaca2"/>
<rect x="2900.0" y="325.9" width="32.0" height="3.8" fill="#dea89f"/>
<rect x="2885.8" y="331.7" width="12.2" height="3.8" fill="#bdaca2"/>
<rect x="2900.0" y="331.7" width="51.8" height="3.8" fill="#dea89f"/>
<rect x="2885.8" y="337.8" width="12.2" height="3.8" fill="#bdaca2"/>
<rect x="2900.0" y="337.8" width="48.0" height="3.8" fill="#dea89f"/>
<rect x="2885.8" y="343.9" width="12.2" height="3.8" fill="#bdaca2"/>
<rect x="2900.0" y="343.9" width="51.8" height="3.8" fill="#dea89f"/>
<rect x="2885.8" y="355.8" width="132.3" height="3.8" fill="#bdaca2"/>
<rect x="3018.1" y="355.8" width="37.8" height="3.8" fill="#dea89f"/>
<rect x="3055.9" y="355.8" width="61.7" height="3.8" fill="#bdaca2"/>
<rect x="2891.9" y="361.9" width="50.0" height="3.8" fill="#bdaca2"/>
<rect x="2941.9" y="361.9" width="11.9" height="3.8" fill="#dea89f"/>
<rect x="2953.8" y="361.9" width="3.8" height="3.8" fill="#bdaca2"/>
<rect x="2957.6" y="361.9" width="38.4" height="3.8" fill="#dea89f"/>
<rect x="2996.0" y="361.9" width="47.7" height="3.8" fill="#bdaca2"/>
<rect x="2885.8" y="373.9" width="16.0" height="3.8" fill="#d3aacd"/>
<rect x="2903.8" y="373.9" width="44.2" height="3.8" fill="#a0b7c7"/>
<rect x="2949.8" y="373.9" width="2.0" height="3.8" fill="#bcbcbc"/>
<rect x="2953.8" y="373.9" width="32.0" height="3.8" fill="#a0b7c7"/>
<rect x="2885.8" y="379.7" width="6.1" height="3.8" fill="#d3aacd"/>
<rect x="2885.8" y="391.9" width="16.0" height="3.8" fill="#d3aacd"/>
<rect x="2903.8" y="391.9" width="26.2" height="3.8" fill="#a9b8b8"/>
<rect x="2932.0" y="391.9" width="3.8" height="3.8" fill="#bcbcbc"/>
<rect x="2935.8" y="391.9" width="160.0" height="3.8" fill="#a9b8b8"/>
<rect x="2885.8" y="403.8" width="16.0" height="3.8" fill="#d3aacd"/>
<rect x="2903.8" y="403.8" width="36.1" height="3.8" fill="#d3aacd"/>
<rect x="2941.9" y="403.8" width="27.9" height="3.8" fill="#b3a3d8"/>
<rect x="2971.9" y="403.8" width="25.9" height="3.8" fill="#a3bed3"/>
<rect x="2885.8" y="409.9" width="16.0" height="3.8" fill="#d3aacd"/>
<rect x="2903.8" y="409.9" width="34.0" height="3.8" fill="#d3aacd"/>
<rect x="2939.9" y="409.9" width="20.1" height="3.8" fill="#b3a3d8"/>
<rect x="2962.0" y="409.9" width="39.8" height="3.8" fill="#a3bed3"/>
<rect x="2885.8" y="421.9" width="6.1" height="3.8" fill="#d3aacd"/>
<rect x="2885.8" y="433.8" width="26.2" height="3.8" fill="#d3aacd"/>
<rect x="2914.0" y="433.8" width="25.9" height="3.8" fill="#a0b7c7"/>
<rect x="2885.8" y="445.7" width="4.1" height="3.8" fill="#bcbcbc"/>
<rect x="2889.8" y="445.7" width="22.1" height="3.8" fill="#d3aacd"/>
<rect x="2912.0" y="445.7" width="25.9" height="3.8" fill="#a3bed3"/>
<rect x="2937.8" y="445.7" width="11.9" height="3.8" fill="#b3a3d8"/>
<rect x="2949.8" y="445.7" width="7.9" height="3.8" fill="#bcbcbc"/>
<rect x="2959.9" y="445.7" width="2.0" height="3.8" fill="#bcbcbc"/>
<rect x="2887.8" y="451.8" width="2.0" height="3.8" fill="#d3aacd"/>
<rect x="2891.9" y="451.8" width="8.1" height="3.8" fill="#d3aacd"/>
<rect x="2901.8" y="451.8" width="2.0" height="3.8" fill="#bcbcbc"/>
<rect x="2903.8" y="451.8" width="10.2" height="3.8" fill="#d3aacd"/>
<rect x="2916.0" y="451.8" width="23.9" height="3.8" fill="#c7b3d9"/>
<rect x="2939.9" y="451.8" width="14.0" height="3.8" fill="#bcbcbc"/>
<rect x="2955.9" y="451.8" width="2.0" height="3.8" fill="#bcbcbc"/>
<rect x="2891.9" y="457.9" width="24.1" height="3.8" fill="#aec1c4"/>
<rect x="2918.1" y="457.9" width="5.8" height="3.8" fill="#bcbcbc"/>
<rect x="2923.9" y="457.9" width="43.9" height="3.8" fill="#a9b8b8"/>
<rect x="2969.8" y="457.9" width="22.1" height="3.8" fill="#c7b3d9"/>
<rect x="2891.9" y="463.7" width="40.1" height="3.8" fill="#aec1c4"/>
<rect x="2933.8" y="463.7" width="2.0" height="3.8" fill="#bcbcbc"/>
<rect x="2937.8" y="463.7" width="8.1" height="3.8" fill="#d3aacd"/>
<rect x="2891.9" y="469.9" width="89.9" height="3.8" fill="#aec1c4"/>
<rect x="2983.8" y="469.9" width="2.0" height="3.8" fill="#bcbcbc"/>
<rect x="2987.9" y="469.9" width="8.1" height="3.8" fill="#d3aacd"/>
<rect x="2891.9" y="481.8" width="128.0" height="3.8" fill="#aac6a2"/>
<rect x="2891.9" y="487.9" width="38.1" height="3.8" fill="#aec1c4"/>
<rect x="2932.0" y="487.9" width="2.0" height="3.8" fill="#bcbcbc"/>
<rect x="2936.1" y="487.9" width="1.7" height="3.8" fill="#b3b3f2"/>
<rect x="2937.8" y="487.9" width="16.0" height="3.8" fill="#dea89f"/>
<rect x="2955.9" y="487.9" width="2.0" height="3.8" fill="#bcbcbc"/>
<rect x="2959.9" y="487.9" width="53.8" height="3.8" fill="#aec1c4"/>
<rect x="3013.8" y="487.9" width="11.9" height="3.8" fill="#c7b3d9"/>
<rect x="2937.8" y="494.0" width="16.0" height="3.8" fill="#dea89f"/>
<rect x="2955.9" y="494.0" width="2.0" height="3.8" fill="#bcbcbc"/>
<rect x="2959.9" y="494.0" width="36.1" height="3.8" fill="#c7b3d9"/>
<rect x="2996.0" y="494.0" width="53.8" height="3.8" fill="#aec1c4"/>
<rect x="3049.8" y="494.0" width="16.0" height="3.8" fill="#c7b3d9"/>
<rect x="2891.9" y="505.9" width="54.1" height="3.8" fill="#aec1c4"/>
<rect x="2948.0" y="505.9" width="16.0" height="3.8" fill="#c7b3d9"/>
<rect x="2964.0" y="505.9" width="9.9" height="3.8" fill="#d3aacd"/>
<rect x="2891.9" y="512.0" width="54.1" height="3.8" fill="#aec1c4"/>
<rect x="2948.0" y="512.0" width="16.0" height="3.8" fill="#c7b3d9"/>
<rect x="2964.0" y="512.0" width="16.0" height="3.8" fill="#d3aacd"/>
<rect x="2980.0" y="512.0" width="37.8" height="3.8" fill="#bcbcbc"/>
<rect x="2891.9" y="517.8" width="20.1" height="3.8" fill="#aec1c4"/>
<rect x="2914.0" y="517.8" width="2.0" height="3.8" fill="#bcbcbc"/>
<rect x="2918.1" y="517.8" width="53.8" height="3.8" fill="#aec1c4"/>
<rect x="2891.9" y="529.8" width="89.9" height="3.8" fill="#c7b3d9"/>
<rect x="2983.8" y="529.8" width="16.0" height="3.8" fill="#c7b3d9"/>
<rect x="2999.8" y="529.8" width="16.0" height="3.8" fill="#d3aacd"/>
<rect x="3015.8" y="529.8" width="54.1" height="3.8" fill="#bcbcbc"/>
<rect x="2900.0" y="535.9" width="7.9" height="3.8" fill="#c7b3d9"/>
<rect x="2907.9" y="535.9" width="59.9" height="3.8" fill="#aec1c4"/>
<rect x="2969.8" y="535.9" width="19.8" height="3.8" fill="#c7b3d9"/>
<rect x="2891.9" y="541.7" width="89.9" height="3.8" fill="#c7b3d9"/>
<rect x="2983.8" y="541.7" width="16.0" height="3.8" fill="#c7b3d9"/>
<rect x="2999.8" y="541.7" width="16.0" height="3.8" fill="#d3aacd"/>
<rect x="3015.8" y="541.7" width="54.1" height="3.8" fill="#bcbcbc"/>
<rect x="2900.0" y="547.8" width="7.9" height="3.8" fill="#c7b3d9"/>
<rect x="2907.9" y="547.8" width="57.9" height="3.8" fill="#aec1c4"/>
<rect x="2967.8" y="547.8" width="20.1" height="3.8" fill="#c7b3d9"/>
<rect x="2891.9" y="553.9" width="89.9" height="3.8" fill="#c7b3d9"/>
<rect x="2983.8" y="553.9" width="16.0" height="3.8" fill="#c7b3d9"/>
<rect x="2999.8" y="553.9" width="16.0" height="3.8" fill="#d3aacd"/>
<rect x="3015.8" y="553.9" width="54.1" height="3.8" fill="#bcbcbc"/>
<rect x="2900.0" y="559.7" width="7.9" height="3.8" fill="#c7b3d9"/>
<rect x="2907.9" y="559.7" width="62.0" height="3.8" fill="#aec1c4"/>
<rect x="2971.9" y="559.7" width="20.1" height="3.8" fill="#c7b3d9"/>
<rect x="2891.9" y="571.7" width="89.9" height="3.8" fill="#c7b3d9"/>
<rect x="2983.8" y="571.7" width="16.0" height="3.8" fill="#c7b3d9"/>
<rect x="2999.8" y="571.7" width="16.0" height="3.8" fill="#d3aacd"/>
<rect x="3015.8" y="571.7" width="38.1" height="3.8" fill="#bcbcbc"/>
<rect x="2900.0" y="577.8" width="7.9" height="3.8" fill="#c7b3d9"/>
<rect x="2907.9" y="577.8" width="103.8" height="3.8" fill="#aec1c4"/>
<rect x="3013.8" y="577.8" width="20.1" height="3.8" fill="#c7b3d9"/>
<rect x="2887.8" y="583.9" width="2.0" height="3.8" fill="#bcbcbc"/>
<rect x="2887.8" y="595.8" width="20.1" height="3.8" fill="#d3aacd"/>
<rect x="2885.8" y="601.6" width="2.0" height="3.8" fill="#bcbcbc"/>
<rect x="2885.8" y="613.5" width="4.1" height="3.8" fill="#bcbcbc"/>
<rect x="2889.8" y="613.5" width="8.1" height="3.8" fill="#d3aacd"/>
<rect x="2898.0" y="613.5" width="32.0" height="3.8" fill="#a3bed3"/>
<rect x="2932.0" y="613.5" width="2.0" height="3.8" fill="#bcbcbc"/>
<rect x="2887.8" y="619.6" width="219.9" height="3.8" fill="#aac6a2"/>
<rect x="2887.8" y="625.8" width="10.2" height="3.8" fill="#aac6a2"/>
<rect x="2900.0" y="625.8" width="89.9" height="3.8" fill="#b3b3f2"/>
<rect x="2887.8" y="631.6" width="10.2" height="3.8" fill="#d3aacd"/>
<rect x="2898.0" y="631.6" width="21.8" height="3.8" fill="#aec1c4"/>
<rect x="2921.8" y="631.6" width="54.1" height="3.8" fill="#c7b3d9"/>
<rect x="2978.0" y="631.6" width="19.8" height="3.8" fill="#c7b3d9"/>
<rect x="2997.8" y="631.6" width="8.1" height="3.8" fill="#d3aacd"/>
<rect x="2887.8" y="637.7" width="10.2" height="3.8" fill="#d3aacd"/>
<rect x="2900.0" y="637.7" width="35.8" height="3.8" fill="#c7b3d9"/>
<rect x="2885.8" y="643.5" width="2.0" height="3.8" fill="#bcbcbc"/>
<rect x="2885.8" y="655.4" width="4.1" height="3.8" fill="#bcbcbc"/>
<rect x="2889.8" y="655.4" width="8.1" height="3.8" fill="#d3aacd"/>
<rect x="2898.0" y="655.4" width="11.9" height="3.8" fill="#a3bed3"/>
<rect x="2912.0" y="655.4" width="2.0" height="3.8" fill="#bcbcbc"/>
<rect x="2887.8" y="661.5" width="8.1" height="3.8" fill="#d3aacd"/>
<rect x="2898.0" y="661.5" width="62.0" height="3.8" fill="#aec1c4"/>
<rect x="2887.8" y="667.6" width="90.2" height="3.8" fill="#c7b3d9"/>
<rect x="2978.0" y="667.6" width="9.9" height="3.8" fill="#d3aacd"/>
<rect x="2885.8" y="673.5" width="2.0" height="3.8" fill="#bcbcbc"/>
<rect x="2885.8" y="685.7" width="4.1" height="3.8" fill="#bcbcbc"/>
<rect x="2889.8" y="685.7" width="8.1" height="3.8" fill="#d3aacd"/>
<rect x="2898.0" y="685.7" width="25.9" height="3.8" fill="#a3bed3"/>
<rect x="2925.9" y="685.7" width="2.0" height="3.8" fill="#bcbcbc"/>
<rect x="2887.8" y="692.2" width="28.2" height="3.8" fill="#b3a3d8"/>
<rect x="2918.1" y="692.2" width="17.7" height="3.8" fill="#bcbcbc"/>
<rect x="2937.8" y="692.2" width="2.0" height="3.8" fill="#bcbcbc"/>
<rect x="2941.9" y="692.2" width="7.9" height="3.8" fill="#d3aacd"/>
<rect x="2949.8" y="692.2" width="48.0" height="3.8" fill="#aec1c4"/>
<rect x="2887.8" y="698.0" width="2.0" height="3.8" fill="#d3aacd"/>
<rect x="2891.9" y="698.0" width="18.0" height="3.8" fill="#bcbcbc"/>
<rect x="2912.0" y="698.0" width="2.0" height="3.8" fill="#bcbcbc"/>
<rect x="2916.0" y="698.0" width="3.8" height="3.8" fill="#d3aacd"/>
<rect x="2921.8" y="698.0" width="2.0" height="3.8" fill="#bcbcbc"/>
<rect x="2925.9" y="698.0" width="8.1" height="3.8" fill="#d3aacd"/>
<rect x="2934.1" y="698.0" width="9.9" height="3.8" fill="#c7b3d9"/>
<rect x="2946.0" y="698.0" width="2.0" height="3.8" fill="#bcbcbc"/>
<rect x="2950.1" y="698.0" width="3.8" height="3.8" fill="#d3aacd"/>
<rect x="2955.9" y="698.0" width="2.0" height="3.8" fill="#bcbcbc"/>
<rect x="2959.9" y="698.0" width="7.9" height="3.8" fill="#d3aacd"/>
<rect x="2967.8" y="698.0" width="22.1" height="3.8" fill="#aec1c4"/>
<rect x="2991.9" y="698.0" width="2.0" height="3.8" fill="#bcbcbc"/>
<rect x="2996.0" y="698.0" width="5.8" height="3.8" fill="#d3aacd"/>
<rect x="3003.9" y="698.0" width="2.0" height="3.8" fill="#bcbcbc"/>
<rect x="2891.9" y="704.1" width="9.9" height="3.8" fill="#d3aacd"/>
<rect x="2901.8" y="704.1" width="2.0" height="3.8" fill="#bcbcbc"/>
<rect x="2887.8" y="709.9" width="2.0" height="3.8" fill="#bcbcbc"/>
<rect x="2887.8" y="721.8" width="2.0" height="3.8" fill="#d3aacd"/>
<rect x="2891.9" y="721.8" width="9.9" height="3.8" fill="#d3aacd"/>
<rect x="2901.8" y="721.8" width="88.1" height="3.8" fill="#aec1c4"/>
<rect x="2991.9" y="721.8" width="2.0" height="3.8" fill="#bcbcbc"/>
<rect x="2996.0" y="721.8" width="7.9" height="3.8" fill="#d3aacd"/>
<rect x="3003.9" y="721.8" width="32.0" height="3.8" fill="#aec1c4"/>
<rect x="3037.9" y="721.8" width="2.0" height="3.8" fill="#bcbcbc"/>
<rect x="2891.9" y="727.9" width="8.1" height="3.8" fill="#d3aacd"/>
<rect x="2900.0" y="727.9" width="21.8" height="3.8" fill="#aec1c4"/>
<rect x="2923.9" y="727.9" width="2.0" height="3.8" fill="#bcbcbc"/>
<rect x="2928.0" y="727.9" width="8.1" height="3.8" fill="#d3aacd"/>
<rect x="2936.1" y="727.9" width="23.9" height="3.8" fill="#aec1c4"/>
<rect x="2887.8" y="733.8" width="2.0" height="3.8" fill="#bcbcbc"/>
<rect x="2891.9" y="733.8" width="6.1" height="3.8" fill="#d3aacd"/>
<rect x="2900.0" y="733.8" width="2.0" height="3.8" fill="#bcbcbc"/>
<rect x="2891.9" y="739.9" width="8.1" height="3.8" fill="#d3aacd"/>
<rect x="2900.0" y="739.9" width="21.8" height="3.8" fill="#aec1c4"/>
<rect x="2923.9" y="739.9" width="6.1" height="3.8" fill="#bcbcbc"/>
<rect x="2930.0" y="739.9" width="43.9" height="3.8" fill="#a9b8b8"/>
<rect x="2975.9" y="739.9" width="59.9" height="3.8" fill="#c7b3d9"/>
<rect x="3035.9" y="739.9" width="7.9" height="3.8" fill="#d3aacd"/>
<rect x="3043.7" y="739.9" width="26.2" height="3.8" fill="#aec1c4"/>
<rect x="2887.8" y="746.0" width="2.0" height="3.8" fill="#bcbcbc"/>
<rect x="2887.8" y="757.9" width="10.2" height="3.8" fill="#b3b3f2"/>
<rect x="2900.0" y="757.9" width="32.0" height="3.8" fill="#bcbcbc"/>
<rect x="2934.1" y="757.9" width="2.0" height="3.8" fill="#bcbcbc"/>
<rect x="2937.8" y="757.9" width="8.1" height="3.8" fill="#d3aacd"/>
<rect x="2946.0" y="757.9" width="23.9" height="3.8" fill="#aec1c4"/>
<rect x="2969.8" y="757.9" width="8.1" height="3.8" fill="#c7b3d9"/>
<rect x="2887.8" y="764.0" width="32.0" height="3.8" fill="#bcbcbc"/>
<rect x="2919.8" y="764.0" width="72.1" height="3.8" fill="#c7b3d9"/>
<rect x="2994.0" y="764.0" width="2.0" height="3.8" fill="#bcbcbc"/>
<rect x="2998.1" y="764.0" width="3.8" height="3.8" fill="#d3aacd"/>
<rect x="2887.8" y="775.9" width="8.1" height="3.8" fill="#d3aacd"/>
<rect x="2898.0" y="775.9" width="18.0" height="3.8" fill="#c7b3d9"/>
<rect x="2916.0" y="775.9" width="33.7" height="3.8" fill="#bcbcbc"/>
<rect x="2887.8" y="781.8" width="18.0" height="3.8" fill="#bcbcbc"/>
<rect x="2907.9" y="781.8" width="48.0" height="3.8" fill="#c7b3d9"/>
<rect x="2955.9" y="781.8" width="25.9" height="3.8" fill="#aec1c4"/>
<rect x="2887.8" y="787.9" width="10.2" height="3.8" fill="#d3aacd"/>
<rect x="2898.0" y="787.9" width="21.8" height="3.8" fill="#aec1c4"/>
<rect x="2921.8" y="787.9" width="52.1" height="3.8" fill="#c7b3d9"/>
<rect x="2973.9" y="787.9" width="20.1" height="3.8" fill="#bcbcbc"/>
<rect x="2887.8" y="799.8" width="2.0" height="3.8" fill="#bcbcbc"/>
<rect x="2889.8" y="799.8" width="32.0" height="3.8" fill="#b3a3d8"/>
<rect x="2923.9" y="799.8" width="34.0" height="3.8" fill="#c7b3d9"/>
<rect x="2889.8" y="805.9" width="4.1" height="3.8" fill="#b3b3f2"/>
<rect x="2893.9" y="805.9" width="32.0" height="3.8" fill="#bcbcbc"/>
<rect x="2925.9" y="805.9" width="16.0" height="3.8" fill="#c7b3d9"/>
<rect x="2943.9" y="805.9" width="67.8" height="3.8" fill="#c7b3d9"/>
<rect x="2893.9" y="811.7" width="34.0" height="3.8" fill="#bcbcbc"/>
<rect x="2928.0" y="811.7" width="20.1" height="3.8" fill="#c7b3d9"/>
<rect x="2950.1" y="811.7" width="73.6" height="3.8" fill="#c7b3d9"/>
<rect x="2893.9" y="817.8" width="34.0" height="3.8" fill="#bcbcbc"/>
<rect x="2928.0" y="817.8" width="22.1" height="3.8" fill="#c7b3d9"/>
<rect x="2952.1" y="817.8" width="75.6" height="3.8" fill="#c7b3d9"/>
<rect x="2893.9" y="823.9" width="34.0" height="3.8" fill="#bcbcbc"/>
<rect x="2928.0" y="823.9" width="24.1" height="3.8" fill="#c7b3d9"/>
<rect x="2954.1" y="823.9" width="77.7" height="3.8" fill="#c7b3d9"/>
<rect x="2889.8" y="829.8" width="4.1" height="3.8" fill="#b3b3f2"/>
<rect x="2887.8" y="842.0" width="8.1" height="3.8" fill="#d3aacd"/>
<rect x="2896.0" y="842.0" width="39.8" height="3.8" fill="#aec1c4"/>
<rect x="2937.8" y="842.0" width="2.0" height="3.8" fill="#bcbcbc"/>
<rect x="2941.9" y="842.0" width="8.1" height="3.8" fill="#d3aacd"/>
<rect x="2950.1" y="842.0" width="17.7" height="3.8" fill="#aec1c4"/>
<rect x="2885.8" y="847.8" width="2.0" height="3.8" fill="#bcbcbc"/>
<rect x="2885.8" y="859.7" width="4.1" height="3.8" fill="#bcbcbc"/>
<rect x="2889.8" y="859.7" width="8.1" height="3.8" fill="#d3aacd"/>
<rect x="2898.0" y="859.7" width="57.9" height="3.8" fill="#a3bed3"/>
<rect x="2957.9" y="859.7" width="2.0" height="3.8" fill="#bcbcbc"/>
<rect x="2887.8" y="865.8" width="2.0" height="3.8" fill="#d3aacd"/>
<rect x="2891.9" y="865.8" width="9.9" height="3.8" fill="#d3aacd"/>
<rect x="2901.8" y="865.8" width="24.1" height="3.8" fill="#aec1c4"/>
<rect x="2925.9" y="865.8" width="36.1" height="3.8" fill="#c7b3d9"/>
<rect x="2964.0" y="865.8" width="2.0" height="3.8" fill="#bcbcbc"/>
<rect x="2891.9" y="871.9" width="9.9" height="3.8" fill="#d3aacd"/>
<rect x="2901.8" y="871.9" width="22.1" height="3.8" fill="#aec1c4"/>
<rect x="2925.9" y="871.9" width="62.0" height="3.8" fill="#c7b3d9"/>
<rect x="2891.9" y="877.7" width="9.9" height="3.8" fill="#d3aacd"/>
<rect x="2901.8" y="877.7" width="22.1" height="3.8" fill="#aec1c4"/>
<rect x="2925.9" y="877.7" width="55.8" height="3.8" fill="#c7b3d9"/>
<rect x="2887.8" y="883.9" width="2.0" height="3.8" fill="#bcbcbc"/>
<rect x="2885.8" y="889.7" width="2.0" height="3.8" fill="#bcbcbc"/>
<rect x="2885.8" y="901.9" width="4.1" height="3.8" fill="#bcbcbc"/>
<rect x="2889.8" y="901.9" width="8.1" height="3.8" fill="#d3aacd"/>
<rect x="2898.0" y="901.9" width="34.0" height="3.8" fill="#a3bed3"/>
<rect x="2932.0" y="901.9" width="19.8" height="3.8" fill="#d3aacd"/>
<rect x="2951.8" y="901.9" width="10.2" height="3.8" fill="#bcbcbc"/>
<rect x="2964.0" y="901.9" width="2.0" height="3.8" fill="#bcbcbc"/>
<rect x="2887.8" y="907.7" width="2.0" height="3.8" fill="#d3aacd"/>
<rect x="2891.9" y="907.7" width="9.9" height="3.8" fill="#d3aacd"/>
<rect x="2901.8" y="907.7" width="36.1" height="3.8" fill="#aec1c4"/>
<rect x="2939.9" y="907.7" width="2.0" height="3.8" fill="#bcbcbc"/>
<rect x="2891.9" y="913.8" width="8.1" height="3.8" fill="#d3aacd"/>
<rect x="2900.0" y="913.8" width="35.8" height="3.8" fill="#aec1c4"/>
<rect x="2935.8" y="913.8" width="6.1" height="3.8" fill="#b3b3f2"/>
<rect x="2941.9" y="913.8" width="2.0" height="3.8" fill="#bcbcbc"/>
<rect x="2887.8" y="925.7" width="2.0" height="3.8" fill="#bcbcbc"/>
<rect x="2891.9" y="925.7" width="6.1" height="3.8" fill="#d3aacd"/>
<rect x="2900.0" y="925.7" width="2.0" height="3.8" fill="#bcbcbc"/>
<rect x="2896.0" y="931.8" width="85.8" height="3.8" fill="#aac6a2"/>
<rect x="2896.0" y="937.7" width="2.0" height="3.8" fill="#d3aacd"/>
<rect x="2900.0" y="937.7" width="9.9" height="3.8" fill="#bcbcbc"/>
<rect x="2912.0" y="937.7" width="2.0" height="3.8" fill="#bcbcbc"/>
<rect x="2916.0" y="937.7" width="39.8" height="3.8" fill="#aec1c4"/>
<rect x="2955.9" y="937.7" width="18.0" height="3.8" fill="#dea89f"/>
<rect x="2896.0" y="943.8" width="14.0" height="3.8" fill="#b3a3d8"/>
<rect x="2912.0" y="943.8" width="11.9" height="3.8" fill="#bcbcbc"/>
<rect x="2925.9" y="943.8" width="2.0" height="3.8" fill="#bcbcbc"/>
<rect x="2930.0" y="943.8" width="39.8" height="3.8" fill="#aec1c4"/>
<rect x="2969.8" y="943.8" width="18.0" height="3.8" fill="#dea89f"/>
<rect x="2896.0" y="955.7" width="2.0" height="3.8" fill="#d3aacd"/>
<rect x="2900.0" y="955.7" width="11.9" height="3.8" fill="#bcbcbc"/>
<rect x="2914.0" y="955.7" width="2.0" height="3.8" fill="#bcbcbc"/>
<rect x="2918.1" y="955.7" width="3.8" height="3.8" fill="#d3aacd"/>
<rect x="2923.9" y="955.7" width="2.0" height="3.8" fill="#bcbcbc"/>
<rect x="2928.0" y="955.7" width="9.9" height="3.8" fill="#bcbcbc"/>
<rect x="2939.9" y="955.7" width="2.0" height="3.8" fill="#bcbcbc"/>
<rect x="2943.9" y="955.7" width="6.1" height="3.8" fill="#d3aacd"/>
<rect x="2952.1" y="955.7" width="2.0" height="3.8" fill="#bcbcbc"/>
<rect x="2901.8" y="961.8" width="4.1" height="3.8" fill="#d3aacd"/>
<rect x="2907.9" y="961.8" width="14.0" height="3.8" fill="#bcbcbc"/>
<rect x="2923.9" y="961.8" width="2.0" height="3.8" fill="#bcbcbc"/>
<rect x="2928.0" y="961.8" width="36.1" height="3.8" fill="#c7b3d9"/>
<rect x="2964.0" y="961.8" width="14.0" height="3.8" fill="#bcbcbc"/>
<rect x="2901.8" y="967.6" width="4.1" height="3.8" fill="#d3aacd"/>
<rect x="2907.9" y="967.6" width="4.1" height="3.8" fill="#bcbcbc"/>
<rect x="2914.0" y="967.6" width="14.0" height="3.8" fill="#bcbcbc"/>
<rect x="2930.0" y="967.6" width="32.0" height="3.8" fill="#c7b3d9"/>
<rect x="2962.0" y="967.6" width="18.0" height="3.8" fill="#bcbcbc"/>
<rect x="2901.8" y="973.7" width="6.1" height="3.8" fill="#d3aacd"/>
<rect x="2909.9" y="973.7" width="11.9" height="3.8" fill="#bcbcbc"/>
<rect x="2921.8" y="973.7" width="14.3" height="3.8" fill="#d3aacd"/>
<rect x="2937.8" y="973.7" width="4.1" height="3.8" fill="#bcbcbc"/>
<rect x="2941.9" y="973.7" width="6.1" height="3.8" fill="#d3aacd"/>
<rect x="2950.1" y="973.7" width="7.9" height="3.8" fill="#bcbcbc"/>
<rect x="2901.8" y="979.5" width="40.1" height="3.8" fill="#bcbcbc"/>
<rect x="2896.0" y="985.7" width="2.0" height="3.8" fill="#bcbcbc"/>
<rect x="2887.8" y="991.8" width="2.0" height="3.8" fill="#bcbcbc"/>
<rect x="2885.8" y="997.6" width="2.0" height="3.8" fill="#bcbcbc"/>
<rect x="2885.8" y="1009.8" width="4.1" height="3.8" fill="#bcbcbc"/>
<rect x="2889.8" y="1009.8" width="28.2" height="3.8" fill="#b3a3d8"/>
<rect x="2919.8" y="1009.8" width="2.0" height="3.8" fill="#bcbcbc"/>
<rect x="2921.8" y="1009.8" width="46.0" height="3.8" fill="#a3bed3"/>
<rect x="2969.8" y="1009.8" width="2.0" height="3.8" fill="#bcbcbc"/>
<rect x="2887.8" y="1015.6" width="18.0" height="3.8" fill="#b3a3d8"/>
<rect x="2907.9" y="1015.6" width="27.9" height="3.8" fill="#bcbcbc"/>
<rect x="2937.8" y="1015.6" width="2.0" height="3.8" fill="#bcbcbc"/>
<rect x="2941.9" y="1015.6" width="7.9" height="3.8" fill="#d3aacd"/>
<rect x="2887.8" y="1021.7" width="8.1" height="3.8" fill="#d3aacd"/>
<rect x="2898.0" y="1021.7" width="27.9" height="3.8" fill="#bcbcbc"/>
<rect x="2928.0" y="1021.7" width="2.0" height="3.8" fill="#bcbcbc"/>
<rect x="2932.0" y="1021.7" width="27.9" height="3.8" fill="#bcbcbc"/>
<rect x="2959.9" y="1021.7" width="25.9" height="3.8" fill="#c7b3d9"/>
<rect x="2987.9" y="1021.7" width="2.0" height="3.8" fill="#bcbcbc"/>
<rect x="2891.9" y="1027.5" width="2.0" height="3.8" fill="#d3aacd"/>
<rect x="2896.0" y="1027.5" width="27.9" height="3.8" fill="#bcbcbc"/>
<rect x="2925.9" y="1027.5" width="66.0" height="3.8" fill="#c7b3d9"/>
<rect x="2994.0" y="1027.5" width="2.0" height="3.8" fill="#bcbcbc"/>
<rect x="2896.0" y="1033.6" width="9.9" height="3.8" fill="#d3aacd"/>
<rect x="2907.9" y="1033.6" width="2.0" height="3.8" fill="#bcbcbc"/>
<rect x="2909.9" y="1033.6" width="27.9" height="3.8" fill="#b3a3d8"/>
<rect x="2939.9" y="1033.6" width="30.0" height="3.8" fill="#bcbcbc"/>
<rect x="2891.9" y="1039.8" width="2.0" height="3.8" fill="#bcbcbc"/>
<rect x="2887.8" y="1045.6" width="2.0" height="3.8" fill="#bcbcbc"/>
<rect x="2887.8" y="1051.7" width="18.0" height="3.8" fill="#d3aacd"/>
<rect x="2885.8" y="1057.5" width="2.0" height="3.8" fill="#bcbcbc"/>
<rect x="2885.8" y="1069.7" width="4.1" height="3.8" fill="#bcbcbc"/>
<rect x="2889.8" y="1069.7" width="8.1" height="3.8" fill="#d3aacd"/>
<rect x="2898.0" y="1069.7" width="48.0" height="3.8" fill="#a3bed3"/>
<rect x="2948.0" y="1069.7" width="2.0" height="3.8" fill="#bcbcbc"/>
<rect x="2887.8" y="1075.5" width="10.2" height="3.8" fill="#d3aacd"/>
<rect x="2898.0" y="1075.5" width="21.8" height="3.8" fill="#aec1c4"/>
<rect x="2921.8" y="1075.5" width="56.1" height="3.8" fill="#aec1c4"/>
<rect x="2980.0" y="1075.5" width="17.7" height="3.8" fill="#aec1c4"/>
<rect x="2997.8" y="1075.5" width="6.1" height="3.8" fill="#d3aacd"/>
<rect x="2887.8" y="1081.6" width="10.2" height="3.8" fill="#d3aacd"/>
<rect x="2898.0" y="1081.6" width="71.8" height="3.8" fill="#aec1c4"/>
<rect x="2971.9" y="1081.6" width="25.9" height="3.8" fill="#aec1c4"/>
<rect x="2997.8" y="1081.6" width="6.1" height="3.8" fill="#d3aacd"/>
<rect x="3005.9" y="1081.6" width="16.0" height="3.8" fill="#aec1c4"/>
<rect x="3021.9" y="1081.6" width="3.8" height="3.8" fill="#d3aacd"/>
<rect x="3027.7" y="1081.6" width="26.2" height="3.8" fill="#aec1c4"/>
<rect x="3053.9" y="1081.6" width="7.9" height="3.8" fill="#d3aacd"/>
<rect x="3061.8" y="1081.6" width="26.2" height="3.8" fill="#aec1c4"/>
<rect x="2887.8" y="1087.5" width="10.2" height="3.8" fill="#d3aacd"/>
<rect x="2900.0" y="1087.5" width="9.9" height="3.8" fill="#d3aacd"/>
<rect x="2909.9" y="1087.5" width="71.8" height="3.8" fill="#aec1c4"/>
<rect x="2983.8" y="1087.5" width="34.0" height="3.8" fill="#aec1c4"/>
<rect x="3017.8" y="1087.5" width="4.1" height="3.8" fill="#d3aacd"/>
<rect x="3023.9" y="1087.5" width="18.0" height="3.8" fill="#aec1c4"/>
<rect x="3042.0" y="1087.5" width="9.9" height="3.8" fill="#d3aacd"/>
<rect x="2885.8" y="1093.6" width="2.0" height="3.8" fill="#bcbcbc"/>
<rect x="2885.8" y="1105.5" width="4.1" height="3.8" fill="#bcbcbc"/>
<rect x="2889.8" y="1105.5" width="8.1" height="3.8" fill="#d3aacd"/>
<rect x="2898.0" y="1105.5" width="39.8" height="3.8" fill="#a3bed3"/>
<rect x="2939.9" y="1105.5" width="2.0" height="3.8" fill="#bcbcbc"/>
<rect x="2887.8" y="1111.6" width="10.2" height="3.8" fill="#d3aacd"/>
<rect x="2900.0" y="1111.6" width="9.9" height="3.8" fill="#d3aacd"/>
<rect x="2909.9" y="1111.6" width="71.8" height="3.8" fill="#aec1c4"/>
<rect x="2983.8" y="1111.6" width="34.0" height="3.8" fill="#aec1c4"/>
<rect x="3017.8" y="1111.6" width="4.1" height="3.8" fill="#d3aacd"/>
<rect x="3023.9" y="1111.6" width="18.0" height="3.8" fill="#aec1c4"/>
<rect x="3042.0" y="1111.6" width="9.9" height="3.8" fill="#d3aacd"/>
<rect x="2885.8" y="1117.4" width="2.0" height="3.8" fill="#bcbcbc"/>
<rect x="2885.8" y="1130.0" width="4.1" height="3.8" fill="#bcbcbc"/>
<rect x="2889.8" y="1130.0" width="8.1" height="3.8" fill="#d3aacd"/>
<rect x="2898.0" y="1130.0" width="52.1" height="3.8" fill="#a3bed3"/>
<rect x="2950.1" y="1130.0" width="11.9" height="3.8" fill="#b3a3d8"/>
<rect x="2964.0" y="1130.0" width="17.7" height="3.8" fill="#d3aacd"/>
<rect x="2983.8" y="1130.0" width="10.2" height="3.8" fill="#bcbcbc"/>
<rect x="2996.0" y="1130.0" width="2.0" height="3.8" fill="#bcbcbc"/>
<rect x="2887.8" y="1135.8" width="10.2" height="3.8" fill="#d3aacd"/>
<rect x="2900.0" y="1135.8" width="9.9" height="3.8" fill="#d3aacd"/>
<rect x="2909.9" y="1135.8" width="38.1" height="3.8" fill="#aec1c4"/>
<rect x="2950.1" y="1135.8" width="27.9" height="3.8" fill="#aec1c4"/>
<rect x="2978.0" y="1135.8" width="3.8" height="3.8" fill="#d3aacd"/>
<rect x="2983.8" y="1135.8" width="10.2" height="3.8" fill="#aec1c4"/>
<rect x="2994.0" y="1135.8" width="11.9" height="3.8" fill="#bcbcbc"/>
<rect x="2885.8" y="1142.0" width="2.0" height="3.8" fill="#bcbcbc"/>
<rect x="2887.8" y="1171.9" width="2.0" height="3.8" fill="#d3aacd"/>
<rect x="2891.9" y="1171.9" width="9.9" height="3.8" fill="#d3aacd"/>
<rect x="2901.8" y="1171.9" width="28.2" height="3.8" fill="#aec1c4"/>
<rect x="2932.0" y="1171.9" width="2.0" height="3.8" fill="#bcbcbc"/>
<rect x="2891.9" y="1178.0" width="8.1" height="3.8" fill="#d3aacd"/>
<rect x="2900.0" y="1178.0" width="27.9" height="3.8" fill="#aec1c4"/>
<rect x="2928.0" y="1178.0" width="6.1" height="3.8" fill="#b3a3d8"/>
<rect x="2934.1" y="1178.0" width="2.0" height="3.8" fill="#bcbcbc"/>
<rect x="2887.8" y="1183.8" width="2.0" height="3.8" fill="#bcbcbc"/>
<rect x="2885.8" y="1189.9" width="2.0" height="3.8" fill="#bcbcbc"/>
<rect x="2885.8" y="1201.9" width="4.1" height="3.8" fill="#bcbcbc"/>
<rect x="2889.8" y="1201.9" width="8.1" height="3.8" fill="#d3aacd"/>
<rect x="2898.0" y="1201.9" width="21.8" height="3.8" fill="#a3bed3"/>
<rect x="2919.8" y="1201.9" width="22.1" height="3.8" fill="#a9b8b8"/>
<rect x="2943.9" y="1201.9" width="16.0" height="3.8" fill="#bcbcbc"/>
<rect x="2962.0" y="1201.9" width="37.8" height="3.8" fill="#a3bed3"/>
<rect x="2999.8" y="1201.9" width="11.9" height="3.8" fill="#b3a3d8"/>
<rect x="3013.8" y="1201.9" width="10.2" height="3.8" fill="#bcbcbc"/>
<rect x="3026.0" y="1201.9" width="2.0" height="3.8" fill="#bcbcbc"/>
<rect x="2887.8" y="1208.0" width="2.0" height="3.8" fill="#d3aacd"/>
<rect x="2891.9" y="1208.0" width="9.9" height="3.8" fill="#d3aacd"/>
<rect x="2901.8" y="1208.0" width="36.1" height="3.8" fill="#aec1c4"/>
<rect x="2939.9" y="1208.0" width="2.0" height="3.8" fill="#bcbcbc"/>
<rect x="2891.9" y="1213.8" width="8.1" height="3.8" fill="#d3aacd"/>
<rect x="2900.0" y="1213.8" width="35.8" height="3.8" fill="#aec1c4"/>
<rect x="2935.8" y="1213.8" width="2.0" height="3.8" fill="#b3b3f2"/>
<rect x="2937.8" y="1213.8" width="16.0" height="3.8" fill="#dea89f"/>
<rect x="2955.9" y="1213.8" width="10.2" height="3.8" fill="#bcbcbc"/>
<rect x="2966.1" y="1213.8" width="19.8" height="3.8" fill="#c7b3d9"/>
<rect x="2985.8" y="1213.8" width="2.0" height="3.8" fill="#b3b3f2"/>
<rect x="2887.8" y="1219.9" width="2.0" height="3.8" fill="#bcbcbc"/>
<rect x="2885.8" y="1225.7" width="2.0" height="3.8" fill="#bcbcbc"/>
<rect x="2891.9" y="1256.0" width="30.0" height="3.8" fill="#a3bed3"/>
<rect x="2921.8" y="1256.0" width="14.0" height="3.8" fill="#b3a3d8"/>
<rect x="2935.8" y="1256.0" width="26.2" height="3.8" fill="#bcbcbc"/>
<rect x="2964.0" y="1256.0" width="27.9" height="3.8" fill="#a3bed3"/>
<rect x="2991.9" y="1256.0" width="11.9" height="3.8" fill="#b3a3d8"/>
<rect x="3003.9" y="1256.0" width="46.0" height="3.8" fill="#a9b8b8"/>
<rect x="3051.9" y="1256.0" width="25.9" height="3.8" fill="#bcbcbc"/>
<rect x="2891.9" y="1261.8" width="16.0" height="3.8" fill="#a3bed3"/>
<rect x="2907.9" y="1261.8" width="22.1" height="3.8" fill="#a9b8b8"/>
<rect x="2932.0" y="1261.8" width="16.0" height="3.8" fill="#bcbcbc"/>
<rect x="2950.1" y="1261.8" width="17.7" height="3.8" fill="#a3bed3"/>
<rect x="2967.8" y="1261.8" width="14.0" height="3.8" fill="#b3a3d8"/>
<rect x="2981.8" y="1261.8" width="16.0" height="3.8" fill="#bcbcbc"/>
<rect x="2999.8" y="1261.8" width="2.0" height="3.8" fill="#bcbcbc"/>
<rect x="2887.8" y="1267.9" width="2.0" height="3.8" fill="#d3aacd"/>
<rect x="2891.9" y="1267.9" width="9.9" height="3.8" fill="#d3aacd"/>
<rect x="2901.8" y="1267.9" width="32.3" height="3.8" fill="#aec1c4"/>
<rect x="2936.1" y="1267.9" width="2.0" height="3.8" fill="#bcbcbc"/>
<rect x="2891.9" y="1274.0" width="9.9" height="3.8" fill="#b3a3d8"/>
<rect x="2903.8" y="1274.0" width="26.2" height="3.8" fill="#bcbcbc"/>
<rect x="2932.0" y="1274.0" width="19.8" height="3.8" fill="#bcbcbc"/>
<rect x="2953.8" y="1274.0" width="50.0" height="3.8" fill="#aec1c4"/>
<rect x="3003.9" y="1274.0" width="9.9" height="3.8" fill="#d3aacd"/>
<rect x="2891.9" y="1279.8" width="20.1" height="3.8" fill="#b3a3d8"/>
<rect x="2914.0" y="1279.8" width="35.8" height="3.8" fill="#bcbcbc"/>
<rect x="2951.8" y="1279.8" width="4.1" height="3.8" fill="#bcbcbc"/>
<rect x="2955.9" y="1279.8" width="32.0" height="3.8" fill="#b3a3d8"/>
<rect x="2989.9" y="1279.8" width="32.0" height="3.8" fill="#c7b3d9"/>
<rect x="3021.9" y="1279.8" width="23.9" height="3.8" fill="#bcbcbc"/>
<rect x="3047.8" y="1279.8" width="32.0" height="3.8" fill="#c7b3d9"/>
<rect x="3081.8" y="1279.8" width="10.2" height="3.8" fill="#c7b3d9"/>
<rect x="3092.0" y="1279.8" width="9.9" height="3.8" fill="#d3aacd"/>
<rect x="2891.9" y="1285.9" width="8.1" height="3.8" fill="#d3aacd"/>
<rect x="2900.0" y="1285.9" width="32.0" height="3.8" fill="#aec1c4"/>
<rect x="2932.0" y="1285.9" width="37.8" height="3.8" fill="#bcbcbc"/>
<rect x="2887.8" y="1291.7" width="2.0" height="3.8" fill="#bcbcbc"/>
<rect x="2887.8" y="1297.9" width="20.1" height="3.8" fill="#d3aacd"/>
<rect x="2907.9" y="1297.9" width="71.8" height="3.8" fill="#aec1c4"/>
<rect x="2885.8" y="1303.7" width="2.0" height="3.8" fill="#bcbcbc"/>
<rect x="2885.8" y="1315.9" width="4.1" height="3.8" fill="#bcbcbc"/>
<rect x="2889.8" y="1315.9" width="8.1" height="3.8" fill="#d3aacd"/>
<rect x="2898.0" y="1315.9" width="32.0" height="3.8" fill="#a3bed3"/>
<rect x="2930.0" y="1315.9" width="32.0" height="3.8" fill="#a9b8b8"/>
<rect x="2964.0" y="1315.9" width="23.9" height="3.8" fill="#bcbcbc"/>
<rect x="2989.9" y="1315.9" width="34.0" height="3.8" fill="#a3bed3"/>
<rect x="3023.9" y="1315.9" width="11.9" height="3.8" fill="#d3aacd"/>
<rect x="3037.9" y="1315.9" width="21.8" height="3.8" fill="#a9b8b8"/>
<rect x="3061.8" y="1315.9" width="16.0" height="3.8" fill="#bcbcbc"/>
<rect x="2891.9" y="1321.7" width="22.1" height="3.8" fill="#a3bed3"/>
<rect x="2914.0" y="1321.7" width="21.8" height="3.8" fill="#b3a3d8"/>
<rect x="2935.8" y="1321.7" width="42.2" height="3.8" fill="#a9b8b8"/>
<rect x="2978.0" y="1321.7" width="3.8" height="3.8" fill="#d3aacd"/>
<rect x="2983.8" y="1321.7" width="27.9" height="3.8" fill="#d3aacd"/>
<rect x="3019.9" y="1321.7" width="14.0" height="3.8" fill="#d3aacd"/>
<rect x="3035.9" y="1321.7" width="2.0" height="3.8" fill="#bcbcbc"/>
<rect x="3039.9" y="1321.7" width="16.0" height="3.8" fill="#d3aacd"/>
<rect x="3055.9" y="1321.7" width="11.9" height="3.8" fill="#bcbcbc"/>
<rect x="3069.9" y="1321.7" width="2.0" height="3.8" fill="#bcbcbc"/>
<rect x="2887.8" y="1327.8" width="10.2" height="3.8" fill="#d3aacd"/>
<rect x="2900.0" y="1327.8" width="9.9" height="3.8" fill="#d3aacd"/>
<rect x="2909.9" y="1327.8" width="39.8" height="3.8" fill="#aec1c4"/>
<rect x="2885.8" y="1333.6" width="2.0" height="3.8" fill="#bcbcbc"/>
<rect x="2885.8" y="1345.8" width="4.1" height="3.8" fill="#bcbcbc"/>
<rect x="2889.8" y="1345.8" width="8.1" height="3.8" fill="#d3aacd"/>
<rect x="2898.0" y="1345.8" width="32.0" height="3.8" fill="#a3bed3"/>
<rect x="2930.0" y="1345.8" width="32.0" height="3.8" fill="#a9b8b8"/>
<rect x="2964.0" y="1345.8" width="23.9" height="3.8" fill="#bcbcbc"/>
<rect x="2989.9" y="1345.8" width="37.8" height="3.8" fill="#a3bed3"/>
<rect x="3027.7" y="1345.8" width="22.1" height="3.8" fill="#a9b8b8"/>
<rect x="3051.9" y="1345.8" width="16.0" height="3.8" fill="#bcbcbc"/>
<rect x="2891.9" y="1351.7" width="27.9" height="3.8" fill="#a3bed3"/>
<rect x="2919.8" y="1351.7" width="16.0" height="3.8" fill="#b3a3d8"/>
<rect x="2935.8" y="1351.7" width="16.0" height="3.8" fill="#bcbcbc"/>
<rect x="2953.8" y="1351.7" width="2.0" height="3.8" fill="#bcbcbc"/>
<rect x="2887.8" y="1357.8" width="8.1" height="3.8" fill="#d3aacd"/>
<rect x="2898.0" y="1357.8" width="62.0" height="3.8" fill="#aec1c4"/>
<rect x="2959.9" y="1357.8" width="21.8" height="3.8" fill="#bcbcbc"/>
<rect x="2983.8" y="1357.8" width="16.0" height="3.8" fill="#aec1c4"/>
<rect x="2999.8" y="1357.8" width="14.0" height="3.8" fill="#bcbcbc"/>
<rect x="3015.8" y="1357.8" width="20.1" height="3.8" fill="#aec1c4"/>
<rect x="3035.9" y="1357.8" width="18.0" height="3.8" fill="#bcbcbc"/>
<rect x="2885.8" y="1363.6" width="2.0" height="3.8" fill="#bcbcbc"/>
<rect x="2885.8" y="1375.8" width="4.1" height="3.8" fill="#bcbcbc"/>
<rect x="2889.8" y="1375.8" width="8.1" height="3.8" fill="#d3aacd"/>
<rect x="2898.0" y="1375.8" width="32.0" height="3.8" fill="#a3bed3"/>
<rect x="2930.0" y="1375.8" width="32.0" height="3.8" fill="#a9b8b8"/>
<rect x="2964.0" y="1375.8" width="23.9" height="3.8" fill="#bcbcbc"/>
<rect x="2989.9" y="1375.8" width="50.0" height="3.8" fill="#a3bed3"/>
<rect x="3039.9" y="1375.8" width="21.8" height="3.8" fill="#a9b8b8"/>
<rect x="3063.8" y="1375.8" width="16.0" height="3.8" fill="#bcbcbc"/>
<rect x="2891.9" y="1381.6" width="27.9" height="3.8" fill="#a3bed3"/>
<rect x="2919.8" y="1381.6" width="16.0" height="3.8" fill="#b3a3d8"/>
<rect x="2935.8" y="1381.6" width="16.0" height="3.8" fill="#bcbcbc"/>
<rect x="2953.8" y="1381.6" width="2.0" height="3.8" fill="#bcbcbc"/>
<rect x="2887.8" y="1387.7" width="8.1" height="3.8" fill="#d3aacd"/>
<rect x="2898.0" y="1387.7" width="62.0" height="3.8" fill="#aec1c4"/>
<rect x="2959.9" y="1387.7" width="21.8" height="3.8" fill="#bcbcbc"/>
<rect x="2983.8" y="1387.7" width="16.0" height="3.8" fill="#aec1c4"/>
<rect x="2999.8" y="1387.7" width="14.0" height="3.8" fill="#bcbcbc"/>
<rect x="3015.8" y="1387.7" width="20.1" height="3.8" fill="#aec1c4"/>
<rect x="3035.9" y="1387.7" width="18.0" height="3.8" fill="#bcbcbc"/>
<rect x="2885.8" y="1393.6" width="2.0" height="3.8" fill="#bcbcbc"/>
<rect x="2885.8" y="1405.8" width="4.1" height="3.8" fill="#bcbcbc"/>
<rect x="2889.8" y="1405.8" width="8.1" height="3.8" fill="#d3aacd"/>
<rect x="2898.0" y="1405.8" width="32.0" height="3.8" fill="#a3bed3"/>
<rect x="2930.0" y="1405.8" width="32.0" height="3.8" fill="#a9b8b8"/>
<rect x="2964.0" y="1405.8" width="23.9" height="3.8" fill="#bcbcbc"/>
<rect x="2989.9" y="1405.8" width="32.0" height="3.8" fill="#a3bed3"/>
<rect x="3021.9" y="1405.8" width="14.0" height="3.8" fill="#d3aacd"/>
<rect x="3037.9" y="1405.8" width="21.8" height="3.8" fill="#a9b8b8"/>
<rect x="3061.8" y="1405.8" width="16.0" height="3.8" fill="#bcbcbc"/>
<rect x="3079.8" y="1405.8" width="2.0" height="3.8" fill="#bcbcbc"/>
<rect x="2887.8" y="1411.9" width="32.0" height="3.8" fill="#bdaca2"/>
<rect x="2919.8" y="1411.9" width="16.0" height="3.8" fill="#bcbcbc"/>
<rect x="2885.8" y="1417.7" width="2.0" height="3.8" fill="#bcbcbc"/>
<rect x="2887.8" y="1447.7" width="24.1" height="3.8" fill="#a9b8b8"/>
<rect x="2914.0" y="1447.7" width="16.0" height="3.8" fill="#bcbcbc"/>
<rect x="2932.0" y="1447.7" width="2.0" height="3.8" fill="#bcbcbc"/>
<rect x="2936.1" y="1447.7" width="7.9" height="3.8" fill="#d3aacd"/>
<rect x="2943.9" y="1447.7" width="41.9" height="3.8" fill="#aec1c4"/>
<rect x="2887.8" y="1453.8" width="22.1" height="3.8" fill="#a9b8b8"/>
<rect x="2912.0" y="1453.8" width="16.0" height="3.8" fill="#bcbcbc"/>
<rect x="2930.0" y="1453.8" width="4.1" height="3.8" fill="#bcbcbc"/>
<rect x="2934.1" y="1453.8" width="7.9" height="3.8" fill="#d3aacd"/>
<rect x="2941.9" y="1453.8" width="22.1" height="3.8" fill="#aec1c4"/>
<rect x="2966.1" y="1453.8" width="39.8" height="3.8" fill="#aec1c4"/>
<rect x="3005.9" y="1453.8" width="18.0" height="3.8" fill="#bcbcbc"/>
<rect x="2887.8" y="1459.6" width="8.1" height="3.8" fill="#d3aacd"/>
<rect x="2898.0" y="1459.6" width="62.0" height="3.8" fill="#aec1c4"/>
<rect x="2959.9" y="1459.6" width="7.9" height="3.8" fill="#d3aacd"/>
<rect x="2967.8" y="1459.6" width="22.1" height="3.8" fill="#aec1c4"/>
<rect x="2991.9" y="1459.6" width="16.0" height="3.8" fill="#aec1c4"/>
<rect x="3007.9" y="1459.6" width="14.0" height="3.8" fill="#bcbcbc"/>
<rect x="3023.9" y="1459.6" width="19.8" height="3.8" fill="#aec1c4"/>
<rect x="3043.7" y="1459.6" width="18.0" height="3.8" fill="#bcbcbc"/>
<rect x="2885.8" y="1465.7" width="2.0" height="3.8" fill="#bcbcbc"/>
<rect x="2885.8" y="1477.6" width="4.1" height="3.8" fill="#bcbcbc"/>
<rect x="2889.8" y="1477.6" width="8.1" height="3.8" fill="#d3aacd"/>
<rect x="2898.0" y="1477.6" width="57.9" height="3.8" fill="#a3bed3"/>
<rect x="2955.9" y="1477.6" width="50.0" height="3.8" fill="#a9b8b8"/>
<rect x="3007.9" y="1477.6" width="18.0" height="3.8" fill="#bcbcbc"/>
<rect x="3028.0" y="1477.6" width="2.0" height="3.8" fill="#bcbcbc"/>
<rect x="2887.8" y="1483.7" width="24.1" height="3.8" fill="#a9b8b8"/>
<rect x="2914.0" y="1483.7" width="16.0" height="3.8" fill="#bcbcbc"/>
<rect x="2932.0" y="1483.7" width="2.0" height="3.8" fill="#bcbcbc"/>
<rect x="2936.1" y="1483.7" width="7.9" height="3.8" fill="#d3aacd"/>
<rect x="2943.9" y="1483.7" width="41.9" height="3.8" fill="#aec1c4"/>
<rect x="2887.8" y="1489.5" width="22.1" height="3.8" fill="#a9b8b8"/>
<rect x="2912.0" y="1489.5" width="16.0" height="3.8" fill="#bcbcbc"/>
<rect x="2930.0" y="1489.5" width="4.1" height="3.8" fill="#bcbcbc"/>
<rect x="2934.1" y="1489.5" width="7.9" height="3.8" fill="#d3aacd"/>
<rect x="2941.9" y="1489.5" width="22.1" height="3.8" fill="#aec1c4"/>
<rect x="2966.1" y="1489.5" width="39.8" height="3.8" fill="#aec1c4"/>
<rect x="3005.9" y="1489.5" width="18.0" height="3.8" fill="#bcbcbc"/>
<rect x="2887.8" y="1495.6" width="8.1" height="3.8" fill="#d3aacd"/>
<rect x="2898.0" y="1495.6" width="62.0" height="3.8" fill="#aec1c4"/>
<rect x="2959.9" y="1495.6" width="7.9" height="3.8" fill="#d3aacd"/>
<rect x="2967.8" y="1495.6" width="22.1" height="3.8" fill="#aec1c4"/>
<rect x="2991.9" y="1495.6" width="16.0" height="3.8" fill="#aec1c4"/>
<rect x="3007.9" y="1495.6" width="14.0" height="3.8" fill="#bcbcbc"/>
<rect x="3023.9" y="1495.6" width="19.8" height="3.8" fill="#aec1c4"/>
<rect x="3043.7" y="1495.6" width="18.0" height="3.8" fill="#bcbcbc"/>
<rect x="2885.8" y="1501.5" width="2.0" height="3.8" fill="#bcbcbc"/>
<rect x="2892.0" y="1531.9" width="11.7" height="3.8" fill="#a3bed3"/>
<rect x="2903.7" y="1531.9" width="12.3" height="3.8" fill="#b3a3d8"/>
<rect x="2918.1" y="1531.9" width="17.6" height="3.8" fill="#d3aacd"/>
<rect x="2937.8" y="1531.9" width="10.0" height="3.8" fill="#bcbcbc"/>
<rect x="2949.9" y="1531.9" width="1.6" height="3.8" fill="#bcbcbc"/>
<rect x="2887.9" y="1537.9" width="21.9" height="3.8" fill="#a9b8b8"/>
<rect x="2911.9" y="1537.9" width="16.0" height="3.8" fill="#bcbcbc"/>
<rect x="2930.0" y="1537.9" width="1.6" height="3.8" fill="#bcbcbc"/>
<rect x="2934.1" y="1537.9" width="8.2" height="3.8" fill="#d3aacd"/>
<rect x="2942.3" y="1537.9" width="39.6" height="3.8" fill="#aec1c4"/>
<rect x="2887.9" y="1543.8" width="31.8" height="3.8" fill="#bdaca2"/>
<rect x="2919.7" y="1543.8" width="16.0" height="3.8" fill="#bcbcbc"/>
<rect x="2937.8" y="1543.8" width="8.0" height="3.8" fill="#d3aacd"/>
<rect x="2887.9" y="1555.9" width="11.9" height="3.8" fill="#b3a3d8"/>
<rect x="2901.9" y="1555.9" width="28.1" height="3.8" fill="#a9b8b8"/>
<rect x="2931.8" y="1555.9" width="24.0" height="3.8" fill="#bcbcbc"/>
<rect x="2957.9" y="1555.9" width="18.0" height="3.8" fill="#bcbcbc"/>
<rect x="2978.0" y="1555.9" width="45.9" height="3.8" fill="#aec1c4"/>
<rect x="3023.9" y="1555.9" width="16.0" height="3.8" fill="#bcbcbc"/>
<rect x="3042.0" y="1555.9" width="8.0" height="3.8" fill="#aec1c4"/>
<rect x="3050.0" y="1555.9" width="9.8" height="3.8" fill="#bcbcbc"/>
<rect x="2887.9" y="1561.9" width="11.9" height="3.8" fill="#b3a3d8"/>
<rect x="2901.9" y="1561.9" width="21.9" height="3.8" fill="#b3a3d8"/>
<rect x="2925.9" y="1561.9" width="32.0" height="3.8" fill="#bcbcbc"/>
<rect x="2959.9" y="1561.9" width="4.1" height="3.8" fill="#bcbcbc"/>
<rect x="2964.0" y="1561.9" width="15.8" height="3.8" fill="#a9b8b8"/>
<rect x="2981.9" y="1561.9" width="48.0" height="3.8" fill="#aec1c4"/>
<rect x="3029.9" y="1561.9" width="18.0" height="3.8" fill="#bcbcbc"/>
<rect x="3050.0" y="1561.9" width="9.8" height="3.8" fill="#aec1c4"/>
<rect x="3059.8" y="1561.9" width="12.1" height="3.8" fill="#bcbcbc"/>
<rect x="2887.9" y="1567.8" width="9.8" height="3.8" fill="#d3aacd"/>
<rect x="2899.8" y="1567.8" width="2.1" height="3.8" fill="#b3b3f2"/>
<rect x="2901.9" y="1567.8" width="24.0" height="3.8" fill="#dea89f"/>
<rect x="2927.9" y="1567.8" width="1.6" height="3.8" fill="#bcbcbc"/>
<rect x="2931.8" y="1567.8" width="26.0" height="3.8" fill="#bcbcbc"/>
<rect x="2957.9" y="1567.8" width="2.1" height="3.8" fill="#b3b3f2"/>
<rect x="2959.9" y="1567.8" width="1.8" height="3.8" fill="#bcbcbc"/>
<rect x="2885.9" y="1574.0" width="2.1" height="3.8" fill="#bcbcbc"/>
<rect x="2885.9" y="1585.9" width="4.1" height="3.8" fill="#bcbcbc"/>
<rect x="2890.0" y="1585.9" width="7.8" height="3.8" fill="#d3aacd"/>
<rect x="2897.8" y="1585.9" width="26.0" height="3.8" fill="#a3bed3"/>
<rect x="2923.8" y="1585.9" width="4.1" height="3.8" fill="#d3aacd"/>
<rect x="2927.9" y="1585.9" width="24.0" height="3.8" fill="#bcbcbc"/>
<rect x="2954.0" y="1585.9" width="11.9" height="3.8" fill="#a3bed3"/>
<rect x="2965.9" y="1585.9" width="12.1" height="3.8" fill="#b3a3d8"/>
<rect x="2979.8" y="1585.9" width="18.0" height="3.8" fill="#d3aacd"/>
<rect x="2999.9" y="1585.9" width="10.0" height="3.8" fill="#bcbcbc"/>
<rect x="3012.0" y="1585.9" width="1.6" height="3.8" fill="#bcbcbc"/>
<rect x="2887.9" y="1591.8" width="9.8" height="3.8" fill="#b3a3d8"/>
<rect x="2899.8" y="1591.8" width="10.0" height="3.8" fill="#bcbcbc"/>
<rect x="2887.9" y="1598.0" width="2.1" height="3.8" fill="#d3aacd"/>
<rect x="2892.0" y="1598.0" width="25.8" height="3.8" fill="#bcbcbc"/>
<rect x="2919.9" y="1598.0" width="51.9" height="3.8" fill="#c7b3d9"/>
<rect x="2973.9" y="1598.0" width="1.6" height="3.8" fill="#bcbcbc"/>
<rect x="2892.0" y="1603.9" width="5.7" height="3.8" fill="#bcbcbc"/>
<rect x="2899.8" y="1603.9" width="28.1" height="3.8" fill="#bcbcbc"/>
<rect x="2930.0" y="1603.9" width="67.9" height="3.8" fill="#c7b3d9"/>
<rect x="2997.9" y="1603.9" width="2.1" height="3.8" fill="#bcbcbc"/>
<rect x="2887.9" y="1609.9" width="1.6" height="3.8" fill="#bcbcbc"/>
<rect x="2892.0" y="1609.9" width="11.7" height="3.8" fill="#d3aacd"/>
<rect x="2906.0" y="1609.9" width="25.8" height="3.8" fill="#bcbcbc"/>
<rect x="2933.9" y="1609.9" width="60.1" height="3.8" fill="#c7b3d9"/>
<rect x="2999.9" y="1609.9" width="1.8" height="3.8" fill="#bcbcbc"/>
<rect x="2892.0" y="1615.8" width="5.7" height="3.8" fill="#bcbcbc"/>
<rect x="2899.8" y="1615.8" width="3.9" height="3.8" fill="#bcbcbc"/>
<rect x="2903.7" y="1615.8" width="32.0" height="3.8" fill="#b3a3d8"/>
<rect x="2937.8" y="1615.8" width="32.2" height="3.8" fill="#c7b3d9"/>
<rect x="2970.0" y="1615.8" width="24.0" height="3.8" fill="#bcbcbc"/>
<rect x="2995.8" y="1615.8" width="14.2" height="3.8" fill="#c7b3d9"/>
<rect x="3010.0" y="1615.8" width="2.1" height="3.8" fill="#b3b3f2"/>
<rect x="3013.9" y="1615.8" width="10.0" height="3.8" fill="#c7b3d9"/>
<rect x="3023.9" y="1615.8" width="11.9" height="3.8" fill="#bcbcbc"/>
<rect x="2887.9" y="1622.0" width="1.6" height="3.8" fill="#bcbcbc"/>
<rect x="2892.0" y="1622.0" width="5.7" height="3.8" fill="#d3aacd"/>
<rect x="2899.8" y="1622.0" width="1.8" height="3.8" fill="#bcbcbc"/>
<rect x="2892.0" y="1627.9" width="9.8" height="3.8" fill="#c7b3d9"/>
<rect x="2901.9" y="1627.9" width="48.2" height="3.8" fill="#dea89f"/>
<rect x="2950.1" y="1627.9" width="1.8" height="3.8" fill="#bcbcbc"/>
<rect x="2892.0" y="1633.9" width="17.8" height="3.8" fill="#d3aacd"/>
<rect x="2887.9" y="1639.8" width="1.6" height="3.8" fill="#bcbcbc"/>
<rect x="2887.9" y="1651.9" width="21.9" height="3.8" fill="#a9b8b8"/>
<rect x="2911.9" y="1651.9" width="16.0" height="3.8" fill="#bcbcbc"/>
<rect x="2930.0" y="1651.9" width="1.6" height="3.8" fill="#bcbcbc"/>
<rect x="2934.1" y="1651.9" width="8.2" height="3.8" fill="#d3aacd"/>
<rect x="2942.3" y="1651.9" width="39.6" height="3.8" fill="#aec1c4"/>
<rect x="2887.9" y="1657.9" width="31.8" height="3.8" fill="#bdaca2"/>
<rect x="2919.7" y="1657.9" width="16.0" height="3.8" fill="#bcbcbc"/>
<rect x="2937.8" y="1657.9" width="3.9" height="3.8" fill="#d3aacd"/>
<rect x="2887.9" y="1663.8" width="35.9" height="3.8" fill="#a9b8b8"/>
<rect x="2925.9" y="1663.8" width="29.9" height="3.8" fill="#bcbcbc"/>
<rect x="2957.9" y="1663.8" width="1.8" height="3.8" fill="#bcbcbc"/>
<rect x="2961.8" y="1663.8" width="16.2" height="3.8" fill="#bcbcbc"/>
<rect x="2978.0" y="1663.8" width="32.0" height="3.8" fill="#aec1c4"/>
<rect x="3010.0" y="1663.8" width="19.9" height="3.8" fill="#c7b3d9"/>
<rect x="2887.9" y="1675.9" width="5.7" height="3.8" fill="#d3aacd"/>
<rect x="2895.9" y="1675.9" width="11.9" height="3.8" fill="#bcbcbc"/>
<rect x="2909.9" y="1675.9" width="1.6" height="3.8" fill="#bcbcbc"/>
<rect x="2914.0" y="1675.9" width="3.9" height="3.8" fill="#d3aacd"/>
<rect x="2887.9" y="1681.9" width="1.6" height="3.8" fill="#d3aacd"/>
<rect x="2892.0" y="1681.9" width="9.8" height="3.8" fill="#bcbcbc"/>
<rect x="2903.9" y="1681.9" width="1.8" height="3.8" fill="#bcbcbc"/>
<rect x="2892.0" y="1687.8" width="25.8" height="3.8" fill="#a9b8b8"/>
<rect x="2919.9" y="1687.8" width="17.8" height="3.8" fill="#bcbcbc"/>
<rect x="2939.8" y="1687.8" width="4.1" height="3.8" fill="#bcbcbc"/>
<rect x="2943.9" y="1687.8" width="26.0" height="3.8" fill="#a9b8b8"/>
<rect x="2971.8" y="1687.8" width="46.1" height="3.8" fill="#aec1c4"/>
<rect x="3018.0" y="1687.8" width="5.9" height="3.8" fill="#bcbcbc"/>
<rect x="3026.0" y="1687.8" width="29.9" height="3.8" fill="#aec1c4"/>
<rect x="3055.9" y="1687.8" width="27.9" height="3.8" fill="#bcbcbc"/>
<rect x="3085.8" y="1687.8" width="10.0" height="3.8" fill="#aec1c4"/>
<rect x="3095.9" y="1687.8" width="11.9" height="3.8" fill="#bcbcbc"/>
<rect x="2892.0" y="1694.0" width="1.6" height="3.8" fill="#d3aacd"/>
<rect x="2895.9" y="1694.0" width="19.9" height="3.8" fill="#bcbcbc"/>
<rect x="2917.9" y="1694.0" width="1.8" height="3.8" fill="#bcbcbc"/>
<rect x="2895.9" y="1699.9" width="11.9" height="3.8" fill="#bcbcbc"/>
<rect x="2909.9" y="1699.9" width="18.0" height="3.8" fill="#bcbcbc"/>
<rect x="2930.0" y="1699.9" width="25.8" height="3.8" fill="#aec1c4"/>
<rect x="2955.8" y="1699.9" width="2.1" height="3.8" fill="#b3b3f2"/>
<rect x="2957.9" y="1699.9" width="16.0" height="3.8" fill="#bcbcbc"/>
<rect x="2973.9" y="1699.9" width="2.1" height="3.8" fill="#b3b3f2"/>
<rect x="2978.0" y="1699.9" width="13.9" height="3.8" fill="#aec1c4"/>
<rect x="2991.9" y="1699.9" width="5.9" height="3.8" fill="#d3aacd"/>
<rect x="2997.9" y="1699.9" width="2.1" height="3.8" fill="#bcbcbc"/>
<rect x="2892.0" y="1705.9" width="1.6" height="3.8" fill="#bcbcbc"/>
<rect x="2887.9" y="1711.8" width="1.6" height="3.8" fill="#bcbcbc"/>
<rect x="2887.9" y="1723.9" width="1.6" height="3.8" fill="#d3aacd"/>
<rect x="2892.0" y="1723.9" width="15.8" height="3.8" fill="#bcbcbc"/>
<rect x="2909.9" y="1723.9" width="1.6" height="3.8" fill="#bcbcbc"/>
<rect x="2892.0" y="1729.8" width="9.8" height="3.8" fill="#c7b3d9"/>
<rect x="2901.9" y="1729.8" width="50.0" height="3.8" fill="#dea89f"/>
<rect x="2951.9" y="1729.8" width="1.8" height="3.8" fill="#bcbcbc"/>
<rect x="2887.9" y="1735.8" width="1.6" height="3.8" fill="#bcbcbc"/>
<rect x="2887.9" y="1747.9" width="9.8" height="3.8" fill="#d3aacd"/>
<rect x="2899.8" y="1747.9" width="13.9" height="3.8" fill="#bcbcbc"/>
<rect x="2885.9" y="1753.8" width="2.1" height="3.8" fill="#bcbcbc"/>
<rect x="2885.9" y="1765.9" width="4.1" height="3.8" fill="#bcbcbc"/>
<rect x="2890.0" y="1765.9" width="7.8" height="3.8" fill="#d3aacd"/>
<rect x="2897.8" y="1765.9" width="46.1" height="3.8" fill="#a3bed3"/>
<rect x="2943.9" y="1765.9" width="13.9" height="3.8" fill="#b3a3d8"/>
<rect x="2959.9" y="1765.9" width="25.8" height="3.8" fill="#bcbcbc"/>
<rect x="2987.8" y="1765.9" width="2.1" height="3.8" fill="#bcbcbc"/>
<rect x="2887.9" y="1771.9" width="21.9" height="3.8" fill="#a9b8b8"/>
<rect x="2911.9" y="1771.9" width="16.0" height="3.8" fill="#bcbcbc"/>
<rect x="2930.0" y="1771.9" width="1.6" height="3.8" fill="#bcbcbc"/>
<rect x="2934.1" y="1771.9" width="8.2" height="3.8" fill="#d3aacd"/>
<rect x="2942.3" y="1771.9" width="39.6" height="3.8" fill="#aec1c4"/>
<rect x="2887.9" y="1777.8" width="31.8" height="3.8" fill="#bdaca2"/>
<rect x="2919.7" y="1777.8" width="16.0" height="3.8" fill="#bcbcbc"/>
<rect x="2937.8" y="1777.8" width="3.9" height="3.8" fill="#d3aacd"/>
<rect x="2887.9" y="1783.8" width="5.7" height="3.8" fill="#d3aacd"/>
<rect x="2895.9" y="1783.8" width="11.9" height="3.8" fill="#bcbcbc"/>
<rect x="2909.9" y="1783.8" width="1.6" height="3.8" fill="#bcbcbc"/>
<rect x="2914.0" y="1783.8" width="3.9" height="3.8" fill="#d3aacd"/>
<rect x="2887.9" y="1795.9" width="13.9" height="3.8" fill="#b3a3d8"/>
<rect x="2901.9" y="1795.9" width="26.0" height="3.8" fill="#a9b8b8"/>
<rect x="2930.0" y="1795.9" width="29.9" height="3.8" fill="#bcbcbc"/>
<rect x="2962.0" y="1795.9" width="19.9" height="3.8" fill="#bcbcbc"/>
<rect x="2983.9" y="1795.9" width="77.9" height="3.8" fill="#aec1c4"/>
<rect x="3061.9" y="1795.9" width="16.0" height="3.8" fill="#c7b3d9"/></svg><div id="hl"></div></body></html>
